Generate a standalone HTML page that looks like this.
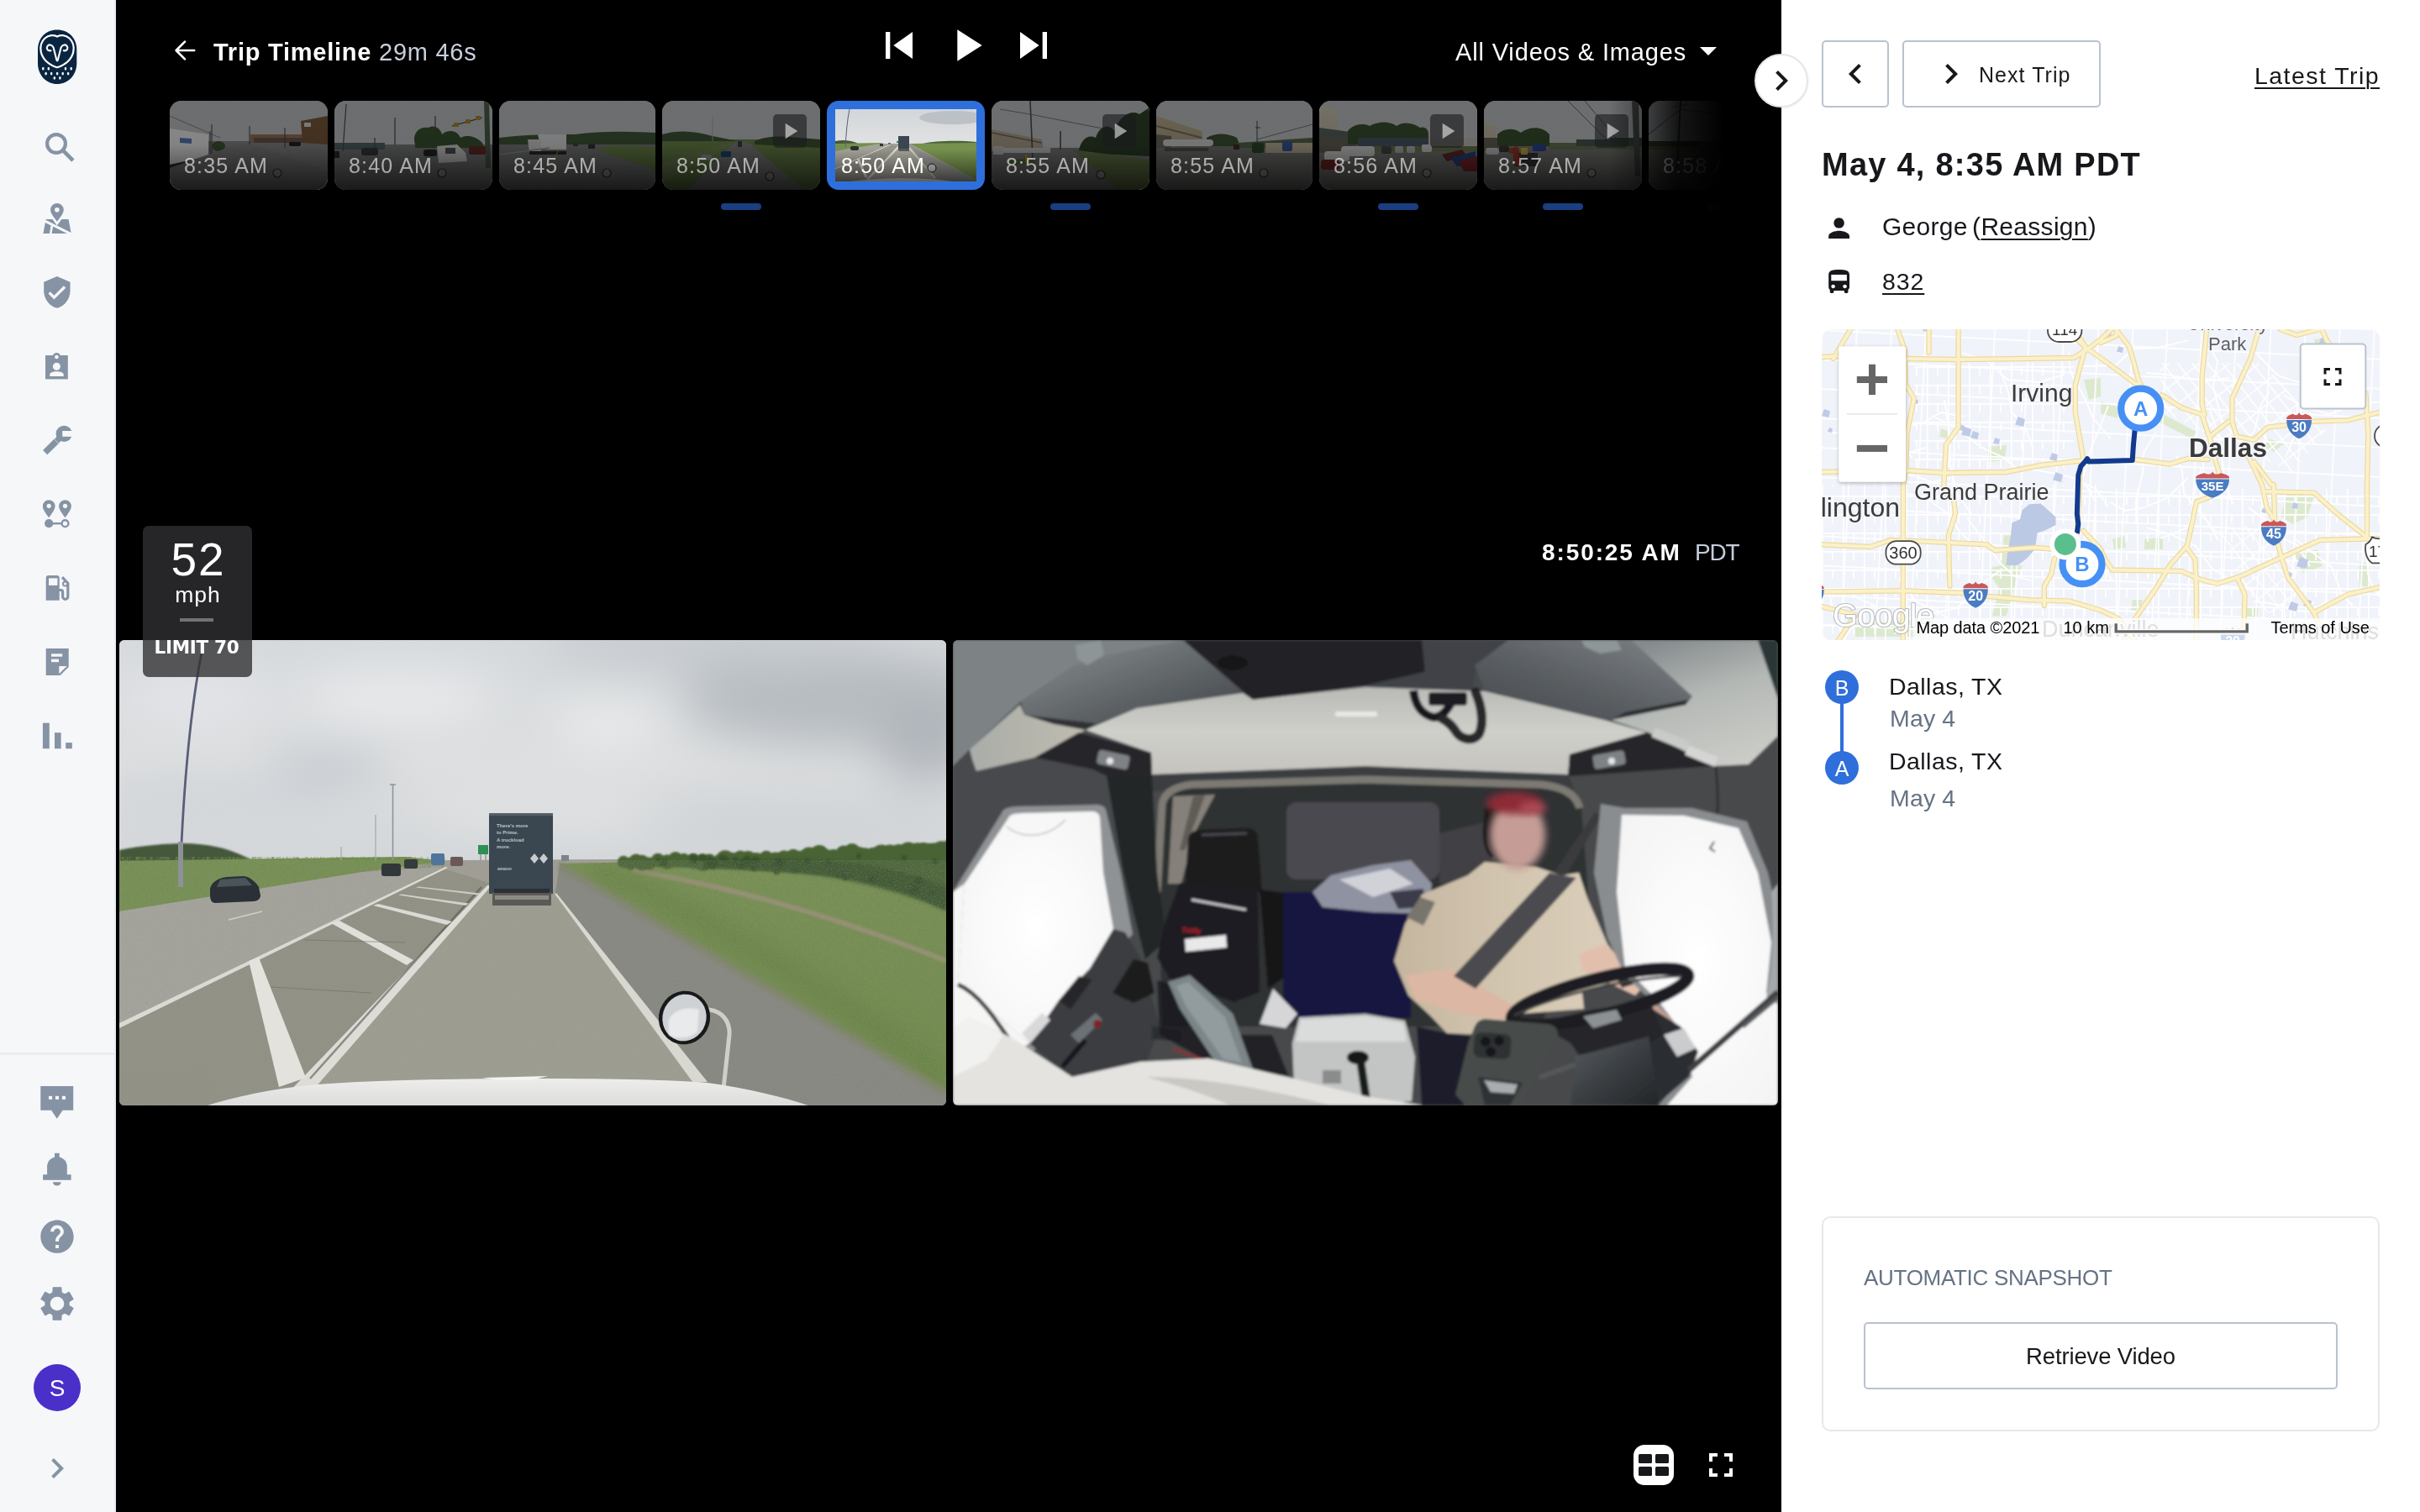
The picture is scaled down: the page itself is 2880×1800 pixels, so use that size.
<!DOCTYPE html>
<html lang="en">
<head>
<meta charset="utf-8">
<title>Trip Timeline</title>
<style>
*{box-sizing:border-box;margin:0;padding:0}
html,body{width:2880px;height:1800px;overflow:hidden;background:#fff}
body{font-family:"Liberation Sans",sans-serif;color:#17181c;position:relative}
.abs{position:absolute}
#side{position:absolute;left:0;top:0;width:138px;height:1800px;background:#f5f7f9;border-right:2px solid #e9ecf0}
#side svg{position:absolute;left:0;top:0}
#stage{position:absolute;left:138px;top:0;width:1982px;height:1800px;background:#000;overflow:hidden}
#panel{position:absolute;left:2120px;top:0;width:760px;height:1800px;background:#fff}
.t{position:absolute;white-space:nowrap;line-height:1;will-change:transform}
/* thumbnails */
.th{position:absolute;top:120px;height:106px;border-radius:14px;overflow:hidden;background:#3a3d3f}
.th svg{position:absolute;left:0;top:0;width:100%;height:100%}
.th .ov{position:absolute;inset:0;background:linear-gradient(to bottom,rgba(0,0,0,.42) 0%,rgba(0,0,0,.47) 50%,rgba(0,0,0,.8) 100%)}
.th .lb{position:absolute;left:17px;top:63px;font-size:25px;letter-spacing:1.2px;color:rgba(255,255,255,.6);line-height:28px;white-space:nowrap;will-change:transform}
.th .pb{position:absolute;right:16px;top:16px;width:40px;height:40px;border-radius:5px;background:rgba(28,28,30,.62)}
.th .pb svg{left:4px;top:4px;width:32px;height:32px}
.ind{position:absolute;top:242px;width:48px;height:8px;border-radius:4px;background:#1a3f80}
.btn{position:absolute;border:2px solid #b9c2cf;border-radius:5px;background:#fff}
u{text-decoration-thickness:2px;text-underline-offset:4px}
</style>
</head>
<body>

<!-- ================= SIDEBAR ================= -->
<div id="side">
<svg width="136" height="1800" viewBox="0 0 136 1800" fill="#8693a4">
<g>
<path fill="#0a2540" d="M68 35.6C82 35.6 91.3 46 91.3 59V75C91.3 90 80.5 100 68 100C55.5 100 45 90 45 75V59C45 46 54 35.6 68 35.6Z"/>
<path fill="none" stroke="#fff" stroke-width="2.2" d="M68 43.4C72 41.4 78 41.4 82.5 45.5C87 49.6 88.6 55.5 87.2 62C85.6 69.5 79 77 68 80.2C57 77 50.4 69.5 48.8 62C47.4 55.5 49 49.6 53.5 45.5C58 41.4 64 41.4 68 43.4Z"/>
<path fill="none" stroke="#fff" stroke-width="2.1" stroke-linecap="round" stroke-linejoin="round" d="M60.5 60.2C56.5 61 54.8 57.6 56.3 55.2C58 52.4 62 52.8 63.6 56.6L67.4 71.6Q68.1 73.2 68.8 71.6L72.6 56.6C74.2 52.8 78.2 52.4 79.9 55.2C81.4 57.6 79.7 61 75.7 60.2"/>
<ellipse cx="51.3" cy="81.7" rx="1.25" ry="1.9" fill="#fff"/>
<ellipse cx="57.8" cy="81.7" rx="1.25" ry="1.9" fill="#fff"/>
<ellipse cx="78" cy="81.7" rx="1.25" ry="1.9" fill="#fff"/>
<ellipse cx="84.7" cy="81.7" rx="1.25" ry="1.9" fill="#fff"/>
<ellipse cx="54.6" cy="87.6" rx="1.25" ry="1.9" fill="#fff"/>
<ellipse cx="61.1" cy="87.6" rx="1.25" ry="1.9" fill="#fff"/>
<ellipse cx="68.1" cy="87.6" rx="1.25" ry="1.9" fill="#fff"/>
<ellipse cx="74.7" cy="87.6" rx="1.25" ry="1.9" fill="#fff"/>
<ellipse cx="81.1" cy="87.6" rx="1.25" ry="1.9" fill="#fff"/>
<ellipse cx="64.8" cy="92.8" rx="1.25" ry="1.9" fill="#fff"/>
<ellipse cx="71.4" cy="92.8" rx="1.25" ry="1.9" fill="#fff"/>
</g>
<circle cx="67" cy="171" r="10.9" fill="none" stroke="#8693a4" stroke-width="4.2"/>
<path d="M75.3 179.3L86.9 191.1" stroke="#8693a4" stroke-width="4.6" fill="none"/>
<path d="M54.7 261H81.5L84.8 277.9H51.4Z"/>
<path d="M52.5 262.6L84.6 278.6" stroke="#f5f7f9" stroke-width="3" fill="none"/>
<path d="M61.9 268.5L60.2 278.5" stroke="#f5f7f9" stroke-width="2.6" fill="none"/>
<path d="M67.9 268.4C62 260.5 57.6 255 57.6 250A10.3 10.3 0 0 1 78.2 250C78.2 255 73.8 260.5 67.9 268.4Z" fill="#f5f7f9"/>
<path d="M67.9 263.8C63.5 258 60.05 253.6 60.05 249.8A7.85 7.85 0 0 1 75.75 249.8C75.75 253.6 72.3 258 67.9 263.8Z"/>
<circle cx="67.9" cy="249.8" r="2.8" fill="#f5f7f9"/>
<path transform="translate(46.98 327.28) scale(1.7389 1.7182)" d="M12 1L3 5v6c0 5.55 3.84 10.74 9 12 5.16-1.26 9-6.45 9-12V5l-9-4zm-2 16l-4-4 1.41-1.41L10 14.17l6.59-6.59L18 9l-8 8z"/>
<rect x="54" y="423" width="26.8" height="28.4"/>
<circle cx="67.4" cy="424.6" r="4.6"/>
<circle cx="67.4" cy="425" r="2.3" fill="#f5f7f9"/>
<circle cx="67.4" cy="436.2" r="4.5" fill="#f5f7f9"/>
<path d="M59.2 448.1V446C59.2 443.5 63 442.3 67.4 442.3S75.7 443.5 75.7 446V448.1Z" fill="#f5f7f9"/>
<circle cx="76.2" cy="516.4" r="9.6"/>
<rect x="74.2" y="513" width="13" height="6.8" fill="#f5f7f9"/>
<path d="M64.3 522.8L69.6 528.3L56.2 541.2L51.1 536Z"/>
<path d="M66.5 521L71.5 526" stroke="#8693a4" stroke-width="5" fill="none"/>
<path d="M58.2 616.2C53.6 609.8 50.900000000000006 606.4 50.900000000000006 602.5A7.3 7.3 0 0 1 65.5 602.5C65.5 606.4 62.800000000000004 609.8 58.2 616.2Z"/>
<circle cx="58.2" cy="602.3" r="2.6" fill="#f5f7f9"/>
<path d="M77.5 616.2C72.9 609.8 70.2 606.4 70.2 602.5A7.3 7.3 0 0 1 84.8 602.5C84.8 606.4 82.1 609.8 77.5 616.2Z"/>
<circle cx="77.5" cy="602.3" r="2.6" fill="#f5f7f9"/>
<circle cx="58.2" cy="623.2" r="5.1"/>
<circle cx="77.5" cy="623.2" r="3.9" fill="none" stroke="#8693a4" stroke-width="2.4"/>
<rect x="62" y="622" width="12" height="2.4"/>
<path d="M54.7 714.7V688A3 3 0 0 1 57.7 685H67.7A3 3 0 0 1 70.7 688V714.7Z"/>
<rect x="58" y="688.4" width="10.4" height="8.5" fill="#f5f7f9"/>
<path d="M70 702.5H72.6A2 2 0 0 1 74.6 704.5V710.3A3.1 3.1 0 0 0 80.8 710.3V694.5L74 687.2" fill="none" stroke="#8693a4" stroke-width="3.2"/>
<circle cx="77.6" cy="695" r="3.6"/>
<circle cx="77.6" cy="695" r="1.6" fill="#f5f7f9"/>
<path d="M54.7 771.9H81.7V794L71.7 804H54.7Z"/>
<rect x="61" y="778.3" width="13.2" height="3.4" fill="#f5f7f9"/>
<rect x="61" y="784.6" width="9" height="3.6" fill="#f5f7f9"/>
<path d="M70.3 793H79.6L70.3 802.2Z" fill="#f5f7f9"/>
<rect x="50.9" y="860.7" width="7.9" height="30.5"/>
<rect x="65" y="872.2" width="7.6" height="19"/>
<rect x="78.2" y="884.1" width="7.6" height="7.1"/>
<rect x="0" y="1253.5" width="136" height="2" fill="#e6e9ed"/>
<path d="M48.3 1293H87.2V1321.7H74.6L67.8 1331.7L61.1 1321.7H48.3Z"/>
<rect x="58" y="1304.8" width="4.1" height="4.1" fill="#f5f7f9"/>
<rect x="65.9" y="1304.8" width="4.1" height="4.1" fill="#f5f7f9"/>
<rect x="73.9" y="1304.8" width="4.1" height="4.1" fill="#f5f7f9"/>
<rect x="65" y="1372.8" width="5.7" height="7"/>
<path d="M56.1 1399V1389A11.85 11.85 0 0 1 79.8 1389V1399Z"/>
<rect x="51.1" y="1398.3" width="33.5" height="6.5"/>
<path d="M63 1407.2H72.6A4.8 4.4 0 0 1 63 1407.2Z"/>
<path transform="translate(44.42 1448.62) scale(1.9650)" d="M12 2C6.48 2 2 6.48 2 12s4.48 10 10 10 10-4.48 10-10S17.52 2 12 2zm1 17h-2v-2h2v2zm2.07-7.75l-.9.92C13.45 12.9 13 13.5 13 15h-2v-.5c0-1.1.45-2.1 1.17-2.83l1.24-1.26c.37-.36.59-.86.59-1.41 0-1.1-.9-2-2-2s-2 .9-2 2H8c0-2.21 1.79-4 4-4s4 1.79 4 4c0 .88-.36 1.68-.93 2.25z"/>
<path d="M62.91 1538.74L63.21 1532.79L72.79 1532.79L73.09 1538.74L76.94 1540.96L82.24 1538.25L87.03 1546.54L82.03 1549.78L82.03 1554.22L87.03 1557.46L82.24 1565.75L76.94 1563.04L73.09 1565.26L72.79 1571.21L63.21 1571.21L62.91 1565.26L59.06 1563.04L53.76 1565.75L48.97 1557.46L53.97 1554.22L53.97 1549.78L48.97 1546.54L53.76 1538.25L59.06 1540.96Z" stroke="#8693a4" stroke-width="1.2" stroke-linejoin="round"/>
<circle cx="68" cy="1552" r="8.3" fill="#f5f7f9"/>
<path transform="translate(44 1724) scale(2)" d="M10 6L8.59 7.41 13.17 12l-4.58 4.59L10 18l6-6z"/>
</svg>
<div class="t" style="left:40px;top:1624px;width:56px;height:56px;border-radius:50%;background:#4a2fc9;color:#fff;font-size:28px;line-height:57px;text-align:center">S</div>
</div>

<!-- ================= STAGE ================= -->
<div id="stage">
<!-- header -->
<svg class="abs" style="left:66px;top:44px" width="32" height="32" viewBox="0 0 32 32" fill="none" stroke="#fff" stroke-width="2.6" stroke-linecap="round" stroke-linejoin="round"><path d="M27.2 16H6.2M16 5.6L5.6 16l10.4 10.400"/></svg>
<div class="t" id="tt" style="left:116px;top:48.2px;font-size:29px;font-weight:bold;color:#fff;letter-spacing:.75px">Trip Timeline</div>
<div class="t" id="dur" style="left:312.5px;top:48.2px;font-size:29px;color:#c9d0dc;letter-spacing:.75px">29m 46s</div>
<!-- controls -->
<svg class="abs" style="left:900px;top:22px" width="64" height="64" viewBox="0 0 24 24" fill="#fff"><path d="M6 6h2v12H6zm3.5 6l8.5 6V6z"/></svg>
<svg class="abs" style="left:980px;top:22px" width="64" height="64" viewBox="0 0 24 24" fill="#fff"><path d="M8 5v14l11-7z"/></svg>
<svg class="abs" style="left:1060px;top:22px" width="64" height="64" viewBox="0 0 24 24" fill="#fff"><path d="M6 18l8.500-6L6 6v12zM16 6v12h2V6h-2z"/></svg>
<!-- filter -->
<div class="t" id="flt" style="left:1594px;top:47.5px;font-size:29px;color:#fff;letter-spacing:.85px">All Videos &amp; Images</div>
<svg class="abs" style="left:1871px;top:36px" width="48" height="48" viewBox="0 0 24 24" fill="#fff"><path d="M7 10l5 5 5-5z"/></svg>
<!-- thumbnails -->
<div class="abs" style="left:64px;top:100px;width:1854px;height:170px;overflow:hidden">
<div class="th" style="top:20px;left:0px;width:188px"><svg viewBox="0 0 188 106" preserveAspectRatio="none"><defs><linearGradient id="tsk_1" x1="0" y1="0" x2="0" y2="1"><stop offset="0" stop-color="#b9bcc0"/><stop offset="1" stop-color="#cfd1d3"/></linearGradient></defs><rect width="188" height="60" fill="url(#tsk_1)"/><rect y="48" width="188" height="58" fill="#8b8c8b"/><path d="M96 40H160V50H96Z" fill="#a0765a"/><path d="M100 44H158V50H100Z" fill="#6e5a4e"/><path d="M156 24L188 18V52L158 50Z" fill="#7a5a3c"/><rect x="160" y="26" width="8" height="5" fill="#d9d9d9"/><path d="M0 33L46 40V68L8 76L0 78Z" fill="#f6f6f6"/><path d="M0 76L46 66V70L6 82L0 82Z" fill="#333"/><path d="M12 44l14 1v6l-14-1z" fill="#5a7fb8"/><path d="M48 36V66M50 28V64M95 30V58M137 32V56" stroke="#3f3f3f" stroke-width="1"/><path d="M0 18L60 44" stroke="#555" stroke-width=".6"/><ellipse cx="58" cy="54" rx="8" ry="6" fill="#3f5a35"/><rect x="142" y="49" width="14" height="5" rx="2" fill="#222"/><path d="M0 80L80 52L100 52L188 84V106H0Z" fill="#858685"/><circle cx="128" cy="86" r="5" fill="#9a9c9e" stroke="#333" stroke-width="1.2"/></svg><div class="ov"></div><div class="lb">8:35 AM</div></div>
<div class="th" style="top:20px;left:196px;width:188px"><svg viewBox="0 0 188 106" preserveAspectRatio="none"><defs><linearGradient id="tsk_2" x1="0" y1="0" x2="0" y2="1"><stop offset="0" stop-color="#b9bcc0"/><stop offset="1" stop-color="#cfd1d3"/></linearGradient></defs><rect width="188" height="60" fill="url(#tsk_2)"/><rect y="52" width="188" height="54" fill="#7f8080"/><path d="M96 52C92 40 100 30 112 32C118 28 126 32 128 40C134 34 146 34 150 44C158 40 168 42 176 50L178 56H96Z" fill="#3a5530"/><path d="M0 50H60V58H0Z" fill="#54666e"/><path d="M14 4L10 60M48 44V58M72 20V52M120 18V40" stroke="#4a4a4a" stroke-width="1.2"/><path d="M140 30L176 20" stroke="#333" stroke-width="1.2"/><rect x="142" y="26" width="6" height="5" fill="#a88b2a"/><rect x="156" y="22" width="6" height="5" fill="#a88b2a"/><rect x="168" y="18" width="6" height="5" fill="#a88b2a"/><path d="M178 0L184 0L186 80L180 80Z" fill="#4f5f4a"/><path d="M122 54L146 52L156 62L158 72L124 74Z" fill="#dcdcdc"/><rect x="132" y="56" width="12" height="7" fill="#555"/><rect x="32" y="56" width="20" height="9" rx="3" fill="#3a3d42"/><rect x="106" y="58" width="16" height="8" rx="3" fill="#25272a"/><rect x="160" y="54" width="20" height="10" rx="2" fill="#6a2d28"/><rect x="0" y="60" width="6" height="8" fill="#2c2c2c"/><circle cx="128" cy="86" r="5" fill="#9a9c9e" stroke="#333" stroke-width="1.2"/></svg><div class="ov"></div><div class="lb">8:40 AM</div></div>
<div class="th" style="top:20px;left:392px;width:186px"><svg viewBox="0 0 186 106" preserveAspectRatio="none"><defs><linearGradient id="tsk_3" x1="0" y1="0" x2="0" y2="1"><stop offset="0" stop-color="#b9bcc0"/><stop offset="1" stop-color="#cfd1d3"/></linearGradient></defs><rect width="188" height="60" fill="url(#tsk_3)"/><rect y="50" width="186" height="56" fill="#7e7f7f"/><path d="M0 44C30 40 60 40 90 40C120 36 150 36 186 38V52H0Z" fill="#445a3a"/><path d="M120 56C140 52 165 52 186 56V82C160 74 140 66 120 60Z" fill="#6f8a4c"/><path d="M46 40H80V58H50Z" fill="#e4e5e6"/><path d="M34 46H50V62H36Z" fill="#d8d9da"/><rect x="36" y="60" width="44" height="4" fill="#2b2b2b"/><rect x="106" y="52" width="8" height="5" fill="#333"/><rect x="88" y="50" width="6" height="4" fill="#444"/><path d="M0 64L60 56" stroke="#9c9c9c" stroke-width="1.5"/><path d="M70 60L56 90" stroke="#a79a3a" stroke-width="1"/><circle cx="128" cy="86" r="5" fill="#9a9c9e" stroke="#333" stroke-width="1.2"/></svg><div class="ov"></div><div class="lb">8:45 AM</div></div>
<div class="th" style="top:20px;left:586px;width:188px"><svg viewBox="0 0 188 106" preserveAspectRatio="none"><defs><linearGradient id="tsk_4" x1="0" y1="0" x2="0" y2="1"><stop offset="0" stop-color="#b9bcc0"/><stop offset="1" stop-color="#cfd1d3"/></linearGradient></defs><rect width="188" height="60" fill="url(#tsk_4)"/><rect y="46" width="188" height="60" fill="#6f8a4c"/><path d="M0 40C20 34 40 36 60 42L90 48H0Z" fill="#41583a"/><path d="M110 48C130 38 160 44 188 46V56L110 52Z" fill="#3d5633"/><path d="M88 48L100 48L170 106H30Z" fill="#858685"/><path d="M0 74L80 50L88 50L0 96Z" fill="#7a8b58"/><path d="M60 18V48" stroke="#aaa" stroke-width="1"/><rect x="70" y="60" width="12" height="7" rx="2" fill="#1f4a7c"/><rect x="46" y="64" width="13" height="7" rx="2" fill="#9fa3a6"/><rect x="90" y="48" width="5" height="7" fill="#3a4048"/><circle cx="128" cy="90" r="5" fill="#9a9c9e" stroke="#333" stroke-width="1.2"/></svg><div class="ov"></div><div class="pb"><svg viewBox="0 0 24 24" fill="rgba(255,255,255,.55)"><path d="M8 5v14l11-7z"/></svg></div><div class="lb">8:50 AM</div></div>
<div class="ind" style="top:142px;left:656px"></div>
<div class="th" style="top:20px;left:782px;width:188px;background:#2f6fdb"><div class="abs" style="left:10px;top:10px;width:168px;height:86px;overflow:hidden;background:#9a9c98"><svg viewBox="0 0 168 86" preserveAspectRatio="none" style="position:absolute;left:0;top:0;width:100%;height:100%"><defs><linearGradient id="tsk2" x1="0" y1="0" x2="0" y2="1"><stop offset="0" stop-color="#d3d6d9"/><stop offset="1" stop-color="#e1e2e3"/></linearGradient><linearGradient id="tdk" x1="0" y1="0" x2="0" y2="1"><stop offset="0" stop-color="#000" stop-opacity="0"/><stop offset=".55" stop-color="#000" stop-opacity="0"/><stop offset="1" stop-color="#000" stop-opacity=".6"/></linearGradient></defs><rect width="168" height="44" fill="url(#tsk2)"/><ellipse cx="140" cy="10" rx="40" ry="8" fill="#bcc1c7"/><rect y="41" width="168" height="45" fill="#a3a297"/><path d="M0 38C10 36 20 37 27 41H0Z" fill="#44583a"/><path d="M104 41C120 37 150 37 168 39V50C150 46 125 43 104 42Z" fill="#486436"/><path d="M0 41L58 40L0 50Z" fill="#74904f"/><path d="M89 41L168 40V84Z" fill="#76914e"/><path d="M88 42L168 84V86H122Z" fill="#8f908a"/><path d="M0 71L66 42L76 45L35 83L19 86H0Z" fill="#96958a"/><path d="M0 71L66 42" stroke="#dad9d2" stroke-width="1"/><path d="M75 45L38 84" stroke="#dddcd6" stroke-width="2.4"/><path d="M27 59L37 81" stroke="#e3e2dd" stroke-width="3"/><path d="M88 46L119 82" stroke="#d8d7d0" stroke-width="1.5"/><rect x="75" y="32" width="13" height="17" fill="#3a4650"/><rect x="76" y="47" width="12" height="3" fill="#5b5a56"/><path d="M17 0C14 14 13 30 12 45" stroke="#5a5e78" stroke-width="1" fill="none"/><rect x="18" y="44" width="10" height="5" rx="2" fill="#2a3035"/><rect x="53" y="41" width="4" height="3" fill="#30363a"/><rect x="63" y="40" width="3" height="2" fill="#4f759b"/><rect x="73" y="38" width="2" height="2" fill="#2f8f55"/><circle cx="115" cy="70" r="5" fill="#cfd2d4" stroke="#17191a" stroke-width="1"/><path d="M18 86C50 82 100 80 140 86Z" fill="#e8e8e6"/><rect width="168" height="86" fill="url(#tdk)"/></svg></div><div class="lb" style="color:#fff">8:50 AM</div></div>
<div class="th" style="top:20px;left:978px;width:188px"><svg viewBox="0 0 188 106" preserveAspectRatio="none"><defs><linearGradient id="tsk_5" x1="0" y1="0" x2="0" y2="1"><stop offset="0" stop-color="#b9bcc0"/><stop offset="1" stop-color="#cfd1d3"/></linearGradient></defs><rect width="188" height="60" fill="url(#tsk_5)"/><rect y="56" width="188" height="50" fill="#808180"/><path d="M0 34L60 46L62 60H0Z" fill="#b5aa93"/><path d="M0 38L60 50" stroke="#6e6a60" stroke-width="1.5"/><path d="M46 0L49 70M82 36V58" stroke="#4f4a45" stroke-width="1.6"/><path d="M10 10L46 16L188 44" stroke="#555" stroke-width=".7" fill="none"/><path d="M104 58C108 44 116 40 124 44C128 30 140 26 146 36C152 18 166 10 176 16L188 8V66L104 62Z" fill="#2f4229"/><path d="M96 58L188 70V106H150Z" fill="#6e8250"/><path d="M14 56H70V62H14Z" fill="#d0d1d2"/><rect x="2" y="54" width="12" height="10" fill="#c9cacc"/><path d="M20 72C30 68 44 68 52 72L50 76H22Z" fill="#5f7a45"/><rect x="40" y="64" width="3" height="10" fill="#b59a2a"/><circle cx="130" cy="88" r="5" fill="#9a9c9e" stroke="#333" stroke-width="1.2"/></svg><div class="ov"></div><div class="pb"><svg viewBox="0 0 24 24" fill="rgba(255,255,255,.55)"><path d="M8 5v14l11-7z"/></svg></div><div class="lb">8:55 AM</div></div>
<div class="ind" style="top:142px;left:1048px"></div>
<div class="th" style="top:20px;left:1174px;width:186px"><svg viewBox="0 0 186 106" preserveAspectRatio="none"><defs><linearGradient id="tsk_6" x1="0" y1="0" x2="0" y2="1"><stop offset="0" stop-color="#b9bcc0"/><stop offset="1" stop-color="#cfd1d3"/></linearGradient></defs><rect width="188" height="60" fill="url(#tsk_6)"/><rect y="52" width="186" height="54" fill="#7b7b79"/><path d="M0 18L54 36L56 52L0 56Z" fill="#b9ad8e"/><path d="M0 30L54 44" stroke="#7a7464" stroke-width="2"/><path d="M0 40L18 42V56H0Z" fill="#6c6a5e"/><path d="M60 44C70 38 84 38 96 44L100 54H60Z" fill="#3e5636"/><path d="M96 50L186 44V56H96Z" fill="#566a4a"/><path d="M120 24V56M118 32H124" stroke="#444" stroke-width="1"/><path d="M120 46L186 28" stroke="#555" stroke-width=".7"/><path d="M130 50H186V62H130Z" fill="#c2b89e"/><rect x="8" y="46" width="60" height="8" rx="4" fill="#d9dadb"/><path d="M10 56H62V60H10Z" fill="#555"/><rect x="114" y="50" width="14" height="12" rx="2" fill="#2e4a2c"/><rect x="150" y="48" width="12" height="12" rx="2" fill="#3a5a9a"/><rect x="92" y="52" width="7" height="6" fill="#4a2a28"/><circle cx="128" cy="86" r="5" fill="#9a9c9e" stroke="#333" stroke-width="1.2"/></svg><div class="ov"></div><div class="lb">8:55 AM</div></div>
<div class="th" style="top:20px;left:1368px;width:188px"><svg viewBox="0 0 188 106" preserveAspectRatio="none"><defs><linearGradient id="tsk_7" x1="0" y1="0" x2="0" y2="1"><stop offset="0" stop-color="#b9bcc0"/><stop offset="1" stop-color="#cfd1d3"/></linearGradient></defs><rect width="188" height="60" fill="url(#tsk_7)"/><rect y="50" width="188" height="56" fill="#80807e"/><path d="M0 4L22 12V40L0 40Z" fill="#c9c2ae"/><path d="M0 32L44 38L46 44L0 44Z" fill="#5a6660"/><path d="M0 44H44V62H0Z" fill="#6a6458"/><path d="M34 36C40 28 52 26 60 30C70 24 84 24 92 30C100 24 112 26 120 32C126 30 130 34 130 40V52H34Z" fill="#3a5230"/><path d="M46 44H140V54H46Z" fill="#4d5a66"/><path d="M30 54H188V60H30Z" fill="#6d7f50"/><path d="M130 44H188V54H130Z" fill="#c9c6c0"/><rect x="26" y="54" width="40" height="12" rx="4" fill="#dfe0e1"/><rect x="6" y="60" width="30" height="12" rx="4" fill="#e3e3e4"/><rect x="2" y="70" width="22" height="12" rx="4" fill="#7a2a28"/><rect x="74" y="54" width="12" height="9" rx="2" fill="#4a4a50"/><rect x="90" y="54" width="10" height="8" rx="2" fill="#b9babb"/><rect x="104" y="54" width="10" height="8" rx="2" fill="#bfc0c2"/><rect x="122" y="52" width="12" height="9" rx="2" fill="#d9d9d9"/><path d="M146 64L170 58L176 66L152 72Z" fill="#6a2a2a"/><path d="M156 68L186 60V76L164 78Z" fill="#2a4a8a"/><path d="M166 72L188 66V84L172 84Z" fill="#8a2a30"/><circle cx="128" cy="86" r="5" fill="#9a9c9e" stroke="#333" stroke-width="1.2"/></svg><div class="ov"></div><div class="pb"><svg viewBox="0 0 24 24" fill="rgba(255,255,255,.55)"><path d="M8 5v14l11-7z"/></svg></div><div class="lb">8:56 AM</div></div>
<div class="ind" style="top:142px;left:1438px"></div>
<div class="th" style="top:20px;left:1564px;width:188px"><svg viewBox="0 0 188 106" preserveAspectRatio="none"><defs><linearGradient id="tsk_8" x1="0" y1="0" x2="0" y2="1"><stop offset="0" stop-color="#b9bcc0"/><stop offset="1" stop-color="#cfd1d3"/></linearGradient></defs><rect width="188" height="60" fill="url(#tsk_8)"/><rect y="52" width="188" height="54" fill="#7f7f7d"/><path d="M0 26L14 30V52H0Z" fill="#c9c2ae"/><path d="M0 44H20V60H0Z" fill="#6a6458"/><path d="M16 40C24 32 36 32 44 38C54 30 70 30 78 40V54H16Z" fill="#3a5230"/><path d="M78 50H188V58H78Z" fill="#6a7a58"/><path d="M150 44H188V54H150Z" fill="#3c5a40"/><path d="M110 46H150V54H110Z" fill="#4a5a50"/><path d="M100 0L150 50M120 0L160 48" stroke="#444" stroke-width=".8"/><path d="M176 0L184 0L186 90L180 90Z" fill="#555a58"/><rect x="2" y="56" width="16" height="8" rx="3" fill="#d0d0d0"/><rect x="18" y="54" width="12" height="7" rx="2" fill="#3a3a40"/><rect x="30" y="56" width="12" height="7" rx="2" fill="#9a4a2a"/><path d="M36 62H64V78H36Z" fill="#3a3a3e"/><path d="M34 56L40 54L44 76L36 78Z" fill="#a03a2a"/><rect x="44" y="56" width="8" height="8" fill="#d9b040"/><rect x="58" y="52" width="16" height="8" rx="2" fill="#2a4a9a"/><circle cx="128" cy="86" r="5" fill="#9a9c9e" stroke="#333" stroke-width="1.2"/></svg><div class="ov"></div><div class="pb"><svg viewBox="0 0 24 24" fill="rgba(255,255,255,.55)"><path d="M8 5v14l11-7z"/></svg></div><div class="lb">8:57 AM</div></div>
<div class="ind" style="top:142px;left:1634px"></div>
<div class="th" style="top:20px;left:1760px;width:188px"><svg viewBox="0 0 188 106" preserveAspectRatio="none"><defs><linearGradient id="tsk_9" x1="0" y1="0" x2="0" y2="1"><stop offset="0" stop-color="#b9bcc0"/><stop offset="1" stop-color="#cfd1d3"/></linearGradient></defs><rect width="188" height="60" fill="url(#tsk_9)"/><rect y="50" width="188" height="56" fill="#7b7b77"/><path d="M0 48H188V58H0Z" fill="#6e6a4e"/><path d="M0 48H60V54H0Z" fill="#3a5230"/><path d="M38 0L34 80" stroke="#444" stroke-width="2"/><path d="M30 8L46 4M0 40L38 10L188 30" stroke="#444" stroke-width=".8" fill="none"/></svg><div class="ov"></div><div class="pb"><svg viewBox="0 0 24 24" fill="rgba(255,255,255,.55)"><path d="M8 5v14l11-7z"/></svg></div><div class="lb">8:58 AM</div></div>
<div class="ind" style="top:142px;left:1830px"></div>
<div class="abs" style="right:0;top:0;width:140px;height:170px;background:linear-gradient(to right,rgba(0,0,0,0) 0,rgba(0,0,0,.35) 38px,rgba(0,0,0,.8) 80px,#000 136px)"></div>
</div>
<!-- videos -->
<div class="abs" style="left:4px;top:762px;width:984px;height:554px;border-radius:6px;overflow:hidden;background:#9b9c94">
<svg class="abs" style="left:0;top:0" width="984" height="554" viewBox="0 0 984 554">
<defs>
<filter id="rb30" x="-20%" y="-20%" width="140%" height="140%"><feGaussianBlur stdDeviation="28"/></filter>
<filter id="rb12" x="-20%" y="-20%" width="140%" height="140%"><feGaussianBlur stdDeviation="12"/></filter>
<filter id="rb3" x="-10%" y="-10%" width="120%" height="120%"><feGaussianBlur stdDeviation="2.2"/></filter>
<filter id="rb1"><feGaussianBlur stdDeviation="0.8"/></filter>
<filter id="rnoise" x="0" y="0" width="100%" height="100%"><feTurbulence type="fractalNoise" baseFrequency="0.9" numOctaves="2" seed="4"/><feColorMatrix values="0 0 0 0 0.3  0 0 0 0 0.3  0 0 0 0 0.25  0.9 0.9 0.9 0 -1.05"/></filter>
<filter id="gnoise" x="0" y="0" width="100%" height="100%"><feTurbulence type="fractalNoise" baseFrequency="0.45 0.16" numOctaves="3" seed="9"/><feColorMatrix values="0 0 0 0 0.16  0 0 0 0 0.26  0 0 0 0 0.08  1.6 1.6 0 0 -1.3"/></filter>
<linearGradient id="skyg" x1="0" y1="0" x2="0" y2="1"><stop offset="0" stop-color="#d6d9dc"/><stop offset=".55" stop-color="#dcdedf"/><stop offset="1" stop-color="#d3d6d9"/></linearGradient>
<linearGradient id="grR" x1="0" y1="0" x2="0" y2="1"><stop offset="0" stop-color="#789150"/><stop offset="1" stop-color="#6d8a46"/></linearGradient>
<linearGradient id="hood" x1="0" y1="0" x2="0" y2="1"><stop offset="0" stop-color="#ededeb"/><stop offset="1" stop-color="#dcdcda"/></linearGradient>
<clipPath id="gclipR"><path d="M522 266L984 258V540Z"/></clipPath>
</defs>
<!-- sky -->
<rect width="984" height="270" fill="url(#skyg)"/>
<g filter="url(#rb30)">
<ellipse cx="860" cy="70" rx="190" ry="55" fill="#b6bbc0"/>
<ellipse cx="960" cy="120" rx="60" ry="50" fill="#b0b5bb"/>
<ellipse cx="700" cy="10" rx="200" ry="30" fill="#c4c9ce"/>
<ellipse cx="250" cy="150" rx="70" ry="18" fill="#c0c5cc"/>
<ellipse cx="330" cy="70" rx="120" ry="30" fill="#e9ebed"/>
<ellipse cx="580" cy="100" rx="70" ry="30" fill="#e8eaeb"/>
<ellipse cx="90" cy="70" rx="90" ry="40" fill="#e2e4e7"/>
<ellipse cx="120" cy="190" rx="150" ry="20" fill="#cfd3d8"/>
<ellipse cx="800" cy="215" rx="200" ry="14" fill="#c9cdd2"/>
<ellipse cx="500" cy="200" rx="150" ry="25" fill="#e0e2e3"/>
</g>
<!-- far hills left -->
<path d="M0 250C20 246 40 243 75 242C110 242 135 250 158 262L0 268Z" fill="#44583a" filter="url(#rb1)"/>
<!-- ground base / road -->
<path d="M0 264L984 259V554H0Z" fill="#a19f97"/>
<!-- left grass -->
<path d="M0 263L340 258L388 263L290 276L0 323Z" fill="#74904f"/>
<path d="M0 263L340 258L388 263L290 276L0 323Z" filter="url(#gnoise)" opacity=".8"/>
<!-- right grass -->
<path d="M522 266L984 258V540Z" fill="url(#grR)"/>
<g clip-path="url(#gclipR)"><rect x="500" y="250" width="484" height="300" filter="url(#gnoise)" opacity=".9"/>
<path d="M612 274C760 300 880 340 984 382" stroke="#94906f" stroke-width="6" fill="none" filter="url(#rb1)"/>
<path d="M560 270C700 330 860 430 984 520" stroke="#64803f" stroke-width="26" fill="none" filter="url(#rb12)" opacity=".7"/>
</g>
<!-- tree line right -->
<g fill="#486334" filter="url(#rb1)"><path d="M596 266L700 258L984 246V322C960 310 930 298 900 290C860 280 760 272 600 269Z"/><circle cx="600" cy="264" r="7.2"/><circle cx="608" cy="266" r="7.6"/><circle cx="615" cy="263" r="8.6"/><circle cx="622" cy="265" r="9.3"/><circle cx="631" cy="266" r="7.4"/><circle cx="641" cy="262" r="8.2"/><circle cx="652" cy="264" r="8.8"/><circle cx="662" cy="261" r="9.0"/><circle cx="672" cy="260" r="6.2"/><circle cx="683" cy="263" r="9.2"/><circle cx="694" cy="265" r="10.2"/><circle cx="702" cy="263" r="8.4"/><circle cx="714" cy="262" r="7.2"/><circle cx="721" cy="261" r="10.8"/><circle cx="729" cy="261" r="8.2"/><circle cx="739" cy="259" r="8.6"/><circle cx="748" cy="262" r="10.9"/><circle cx="758" cy="264" r="10.9"/><circle cx="770" cy="259" r="8.3"/><circle cx="781" cy="264" r="11.5"/><circle cx="791" cy="259" r="8.8"/><circle cx="802" cy="258" r="9.3"/><circle cx="808" cy="263" r="12.2"/><circle cx="815" cy="260" r="10.0"/><circle cx="821" cy="258" r="11.5"/><circle cx="833" cy="255" r="11.1"/><circle cx="839" cy="258" r="10.1"/><circle cx="850" cy="260" r="10.9"/><circle cx="862" cy="254" r="9.4"/><circle cx="872" cy="252" r="10.0"/><circle cx="880" cy="256" r="10.0"/><circle cx="887" cy="258" r="10.7"/><circle cx="898" cy="258" r="11.2"/><circle cx="907" cy="256" r="12.4"/><circle cx="917" cy="256" r="12.4"/><circle cx="928" cy="255" r="11.9"/><circle cx="939" cy="252" r="11.5"/><circle cx="950" cy="254" r="12.7"/><circle cx="957" cy="254" r="12.9"/><circle cx="963" cy="255" r="13.2"/><circle cx="969" cy="254" r="12.6"/><circle cx="979" cy="253" r="13.8"/><circle cx="990" cy="248" r="11.3"/></g>
<path d="M700 264C760 260 820 260 880 266C920 272 960 284 984 294V322C940 302 880 286 820 278C780 274 740 272 700 270Z" fill="#3a542e" filter="url(#rb3)"/>
<g fill="#2f4726" opacity=".6" filter="url(#rb1)"><circle cx="971" cy="264" r="3.4"/><circle cx="844" cy="264" r="3.1"/><circle cx="748" cy="263" r="3.8"/><circle cx="743" cy="264" r="4.3"/><circle cx="649" cy="265" r="4.2"/><circle cx="747" cy="261" r="4.4"/><circle cx="722" cy="261" r="3.3"/><circle cx="880" cy="257" r="3.0"/><circle cx="755" cy="272" r="3.3"/><circle cx="934" cy="259" r="3.0"/><circle cx="864" cy="283" r="3.4"/><circle cx="717" cy="260" r="3.6"/><circle cx="706" cy="269" r="4.5"/><circle cx="703" cy="262" r="4.4"/><circle cx="861" cy="280" r="3.0"/><circle cx="685" cy="262" r="4.4"/><circle cx="733" cy="263" r="3.3"/><circle cx="784" cy="265" r="4.8"/><circle cx="694" cy="259" r="4.8"/><circle cx="943" cy="299" r="3.3"/><circle cx="967" cy="301" r="2.7"/><circle cx="896" cy="285" r="4.0"/><circle cx="819" cy="263" r="3.0"/><circle cx="718" cy="259" r="3.8"/><circle cx="739" cy="270" r="2.1"/><circle cx="951" cy="286" r="4.8"/><circle cx="948" cy="296" r="3.7"/><circle cx="645" cy="267" r="2.5"/><circle cx="743" cy="268" r="3.6"/><circle cx="782" cy="276" r="3.8"/><circle cx="757" cy="262" r="4.6"/><circle cx="804" cy="274" r="3.1"/><circle cx="708" cy="265" r="4.5"/><circle cx="699" cy="268" r="4.8"/><circle cx="917" cy="288" r="2.0"/><circle cx="856" cy="281" r="2.1"/><circle cx="733" cy="262" r="3.6"/><circle cx="786" cy="266" r="4.3"/><circle cx="641" cy="261" r="2.4"/><circle cx="683" cy="260" r="4.9"/></g>
<!-- left lanes slightly lighter -->
<path d="M0 323L290 276L386 270L0 458Z" fill="#a6a59e"/>
<!-- gore area -->
<path d="M0 458L386 272L443 290L205 534L110 554H0Z" fill="#929186"/>
<!-- main lane -->
<path d="M443 288L520 300L700 534L200 540Z" fill="#9f9e92"/>
<!-- shoulder -->
<path d="M519 300L524 268L984 538V554H715Z" fill="#868781"/>
<path d="M524 268L984 538" stroke="#7d8466" stroke-width="10" fill="none" filter="url(#rb3)" opacity=".8"/>
<!-- road texture -->
<rect x="0" y="262" width="984" height="292" filter="url(#rnoise)" opacity=".5"/>
<!-- lane lines -->
<path d="M0 456L388 270L391 271L0 462Z" fill="#dad9d2"/>
<path d="M438 292L444 291L232 534L200 540Z" fill="#dddcd6"/>
<path d="M236 524L440 296" stroke="#55564f" stroke-width="2.5" fill="none" opacity=".6" transform="translate(-9 -2)"/>
<path d="M154 382L166 378L222 521L190 532Z" fill="#e3e2dd"/>
<path d="M252 337L262 334L350 381L342 387Z" fill="#e0dfd9"/>
<path d="M302 316L308 314L396 335L390 339Z" fill="#dad9d3"/>
<path d="M332 303.500L336 302.500L416 313.500L412 316Z" fill="#d2d1cb"/>
<path d="M353 294.500L356 293.500L430 301.500L427 303.500Z" fill="#cccbc5"/>
<path d="M518 302L520.500 301.500L700 526L683 527Z" fill="#d8d7d0"/>
<path d="M130 333L170 323" stroke="#cfcec8" stroke-width="1.6"/>
<!-- joints -->
<path d="M180 413L300 420M220 357L340 360" stroke="#6f6e66" stroke-width="1" opacity=".6"/>
<!-- light pole -->
<path d="M101 0C86 70 76 170 72 292" stroke="#5a5e78" stroke-width="2.8" fill="none"/>
<path d="M70 240H76V294H70Z" fill="#8e9196"/>
<!-- distant poles -->
<path d="M325.500 172V262M322 172H329" stroke="#8f9499" stroke-width="1.6" fill="none"/>
<path d="M305 208V262M264 246V262" stroke="#a3a7ab" stroke-width="1.2"/>
<!-- cars -->
<path d="M108 296C110 288 118 283 128 282L148 281C156 282 162 288 166 294L168 304C168 308 164 311 160 311L114 313C110 313 108 309 108 304Z" fill="#2a3035"/>
<path d="M120 285L150 283L158 292L116 294Z" fill="#4a545b"/>
<rect x="312" y="266" width="23" height="15" rx="3" fill="#30363a"/>
<rect x="339" y="261" width="16" height="11" rx="2" fill="#353a3d"/>
<rect x="371" y="254" width="16" height="14" rx="2" fill="#4f759b"/>
<rect x="394" y="258" width="15" height="11" rx="2" fill="#6a5a57"/>
<rect x="427" y="244" width="12" height="11" fill="#2f8f55"/>
<path d="M430 255V262M436 255V262" stroke="#777" stroke-width="1"/>
<!-- trailer -->
<rect x="440" y="206" width="76" height="96" fill="#3a4650"/>
<rect x="440" y="206" width="76" height="3" fill="#55606a"/>
<rect x="444" y="300" width="70" height="16" fill="#5b5a56"/>
<rect x="447" y="304" width="64" height="5" fill="#8e8b85"/>
<rect x="446" y="296" width="66" height="5" fill="#2b3036"/>
<path d="M489 260l5-6 5 6-5 6zM500 260l5-6 5 6-5 6z" fill="#c9ccce"/>
<text x="449" y="223" font-size="6" fill="#b9c4c6" font-family="Liberation Sans,sans-serif" font-weight="bold">There's more</text>
<text x="449" y="230.500" font-size="6" fill="#b9c4c6" font-family="Liberation Sans,sans-serif" font-weight="bold">to Prime.</text>
<text x="449" y="240" font-size="6" fill="#b9c4c6" font-family="Liberation Sans,sans-serif" font-weight="bold">A truckload</text>
<text x="449" y="247.500" font-size="6" fill="#b9c4c6" font-family="Liberation Sans,sans-serif" font-weight="bold">more.</text>
<text x="450" y="274" font-size="4.500" fill="#b9c4c6" font-family="Liberation Sans,sans-serif" font-weight="bold">amazon</text>
<rect x="526" y="256" width="9" height="7" fill="#7d858c"/>
<!-- mirror -->
<path d="M702 440C716 442 727 452 726 470L719 534" stroke="#cfcfca" stroke-width="5" fill="none" stroke-linecap="round"/>
<ellipse cx="672.500" cy="449.500" rx="30.500" ry="32" transform="rotate(18 672.500 449.500)" fill="#17191a"/>
<ellipse cx="672.500" cy="449.500" rx="26" ry="28" transform="rotate(18 672.500 449.500)" fill="#cfd2d4"/>
<path d="M654 452C660 440 676 436 690 440L688 466C680 474 664 476 654 470Z" fill="#e9eaeb" filter="url(#rb1)"/>
<!-- hood -->
<path d="M105 554C150 540 200 531 250 528C330 523 420 522 500 522C580 522 650 523 700 527C750 534 790 544 820 554Z" fill="url(#hood)"/>
<path d="M432 521L510 519L490 524L452 524Z" fill="#f4f4f2"/>
</svg>

</div>
<div class="abs" style="left:996px;top:762px;width:982px;height:554px;border-radius:6px;overflow:hidden;background:#555">
<svg class="abs" style="left:0;top:0" width="982" height="554" viewBox="0 0 982 554">
<defs>
<filter id="cb1" x="-5%" y="-5%" width="110%" height="110%"><feGaussianBlur stdDeviation="1.5"/></filter>
<filter id="cb4" x="-20%" y="-20%" width="140%" height="140%"><feGaussianBlur stdDeviation="4"/></filter>
<filter id="cb8" x="-30%" y="-30%" width="160%" height="160%"><feGaussianBlur stdDeviation="8"/></filter>
<filter id="cb14" x="-30%" y="-30%" width="160%" height="160%"><feGaussianBlur stdDeviation="14"/></filter>
<linearGradient id="cvL" x1="0" y1="0" x2="1" y2="1"><stop offset="0" stop-color="#8b9092"/><stop offset=".6" stop-color="#5d6265"/><stop offset="1" stop-color="#3f4347"/></linearGradient>
<linearGradient id="cvR" x1="1" y1="0" x2="0" y2="1"><stop offset="0" stop-color="#7f8487"/><stop offset=".55" stop-color="#5a5e62"/><stop offset="1" stop-color="#45484c"/></linearGradient>
<linearGradient id="chl" x1="0" y1="0" x2="0" y2="1"><stop offset="0" stop-color="#b9bab6"/><stop offset=".5" stop-color="#cfcfca"/><stop offset="1" stop-color="#c4c3be"/></linearGradient>
<linearGradient id="ctanL" x1="0" y1="0" x2="1" y2="0"><stop offset="0" stop-color="#a9aca8"/><stop offset="1" stop-color="#c2beb0"/></linearGradient>
<linearGradient id="ctanR" x1=".3" y1="0" x2=".7" y2="1"><stop offset="0" stop-color="#858b8d"/><stop offset=".45" stop-color="#b4b8b5"/><stop offset="1" stop-color="#cbccc7"/></linearGradient>
<linearGradient id="cshirt" x1="0" y1="0" x2="1" y2="0"><stop offset="0" stop-color="#c4b59e"/><stop offset=".5" stop-color="#d3c6b1"/><stop offset="1" stop-color="#dccfbb"/></linearGradient>
<linearGradient id="ccol" x1="0" y1="0" x2="1" y2="1"><stop offset="0" stop-color="#5a5f63"/><stop offset=".5" stop-color="#3a3e42"/><stop offset="1" stop-color="#232528"/></linearGradient>
<radialGradient id="cwl" cx=".5" cy=".5" r=".7"><stop offset="0" stop-color="#ffffff"/><stop offset="1" stop-color="#f3f3f3"/></radialGradient>
</defs>
<g filter="url(#cb1)">
<rect width="982" height="554" fill="#46494c"/>
<!-- upper left -->
<path d="M0 0H274L146 30L81 73L20 130L0 150Z" fill="#7d8285"/>
<path d="M81 73L146 30L183 18L274 0L345 61L219 81L172 99L85 89Z" fill="url(#cvL)"/>
<path d="M20 130L80 77L85 89L172 99L158 107L97 140L28 156L23 142Z" fill="url(#ctanL)"/>
<path d="M85 89L172 99L158 107L120 100Z" fill="#2f3134"/>
<!-- hinge L -->
<path d="M146 6L176 0L180 18L160 30L148 22Z" fill="#8d9597"/>
<!-- console -->
<path d="M274 0H560L562 38L491 54L357 71L345 61Z" fill="#232427"/>
<ellipse cx="333" cy="27" rx="18" ry="9" fill="#131416"/>
<path d="M558 0H665L623 30L618 60L491 55L562 38Z" fill="#3f4246"/>
<!-- right visor -->
<path d="M621 30L661 0H807L880 67L872 77L783 95L633 61Z" fill="url(#cvR)"/>
<path d="M807 0H958L982 61V114L947 148L905 150L828 110L783 95L872 77L880 67Z" fill="url(#ctanR)"/>
<path d="M783 95L872 77L876 71L800 86Z" fill="#2a2c2f"/>
<path d="M958 0H982V70Z" fill="#2b3436"/>
<path d="M748 0L790 0L796 12L770 16L752 8Z" fill="#8e9698"/>
<!-- headliner -->
<path d="M158 107L219 81L345 63L357 71L491 56L633 61L775 95L826 110L734 136L732 162L491 152L237 162L236 134Z" fill="url(#chl)"/>
<rect x="455" y="85" width="50" height="6" rx="2" fill="#e8e8e4"/>
<!-- cb mic + cord -->
<path d="M548 60C550 76 556 88 572 92C584 92 590 80 596 70" stroke="#17181a" stroke-width="10" fill="none"/>
<rect x="566" y="62" width="46" height="16" rx="4" fill="#1d1e20"/>
<path d="M622 62C630 80 632 100 626 112C618 122 604 118 598 108C592 98 586 96 580 92" stroke="#1a1b1d" stroke-width="11" fill="none" stroke-linecap="round"/><path d="M622 62C630 80 632 100 626 112C618 122 604 118 598 108C592 98 586 96 580 92" stroke="#3a3b3e" stroke-width="9" fill="none" stroke-dasharray="1.5 2.5"/>
<!-- corner pieces -->
<path d="M97 140L150 110L236 134L237 162L183 162L166 154Z" fill="#26272a"/>
<path d="M732 162L734 136L826 110L905 150L795 158Z" fill="#26272a"/>
<rect x="172" y="134" width="38" height="17" rx="4" fill="#7f8285" transform="rotate(12 191 142)"/>
<circle cx="187" cy="144" r="4" fill="#e6e6e6"/>
<rect x="762" y="134" width="38" height="17" rx="4" fill="#7f8285" transform="rotate(-10 781 142)"/>
<circle cx="784" cy="144" r="4" fill="#e6e6e6"/>
<rect x="832" y="112" width="44" height="12" fill="#c9cbc9" transform="rotate(22 854 118)"/>
<rect x="872" y="132" width="38" height="12" fill="#d5d6d4" transform="rotate(22 891 138)"/>
<path d="M908 150C912 190 910 220 906 240" stroke="#2a2b2d" stroke-width="2.5" fill="none"/>
<!-- trim under headliner -->
<path d="M237 160L491 150L732 160L740 178L491 170L237 180Z" fill="#3b3d40"/>
<!-- left pillar / upper door area -->
<path d="M0 150L28 156L97 140L166 154L183 162L190 205L60 205L10 280L0 300Z" fill="#474a4d"/>
<!-- sleeper interior -->
<path d="M243 277L249 196Q252 176 284 172L491 166L700 172Q744 176 748 200L756 300L700 460L250 460Z" fill="#2f3033"/>
<path d="M243 300L249 196Q252 176 284 172L491 166L700 172Q740 176 746 200" stroke="#7d7a73" stroke-width="9" fill="none"/>
<!-- curtain in sleeper -->
<path d="M262 186L312 184L286 233L272 290L256 290Z" fill="#858079"/>
<path d="M286 186L300 185L276 250L270 250Z" fill="#5f5b55"/>
<!-- back panel -->
<rect x="397" y="193" width="182" height="92" rx="12" fill="#484a4f"/>
<path d="M579 230L640 215L650 300L579 290Z" fill="#403f45"/>
<!-- passenger seat -->
<path d="M280 236Q282 226 296 226L350 224Q362 224 363 236L368 300L276 300Z" fill="#1a1b1e"/>
<path d="M296 232L350 230" stroke="#4a4b50" stroke-width="3"/>
<path d="M365 297L396 301L398 399L375 415Z" fill="#141517"/>
<!-- bed -->
<path d="M393 300L545 300L545 450L393 450Z" fill="#17183f"/>
<path d="M428 300L450 280L500 268L545 262L570 290L566 326L500 324L440 318Z" fill="#8f92a0"/>
<path d="M460 285L520 272L548 290L500 306Z" fill="#d0d2d8"/>
<path d="M520 300L560 296L562 318L530 320Z" fill="#3a3b4a"/>
<!-- curtain black left of seat -->
<path d="M183 162L237 162L243 277L254 358L229 380L203 277Z" fill="#242528"/>
<!-- left window -->
<path d="M58 206Q60 198 80 198L172 196Q182 196 183 206L200 277L214 350L170 398L132 436L96 490L60 470L100 420L150 380L176 340L168 277L165 214L84 214Q72 214 66 226L20 300L8 420L0 440V300Z" fill="#8f9294"/>
<path d="M0 300L14 290L6 407L16 415L47 443L91 480L60 500L0 470Z" fill="#f6f6f5"/>
<path d="M66 212Q68 206 84 206L166 204Q174 204 175 212L179 277L191 344L163 391L126 429L91 480L47 443L16 415L6 407L14 290Z" fill="url(#cwl)"/>
<path d="M64 222C80 236 110 238 134 214" stroke="#b9b9bb" stroke-width="1.5" fill="none"/>
<!-- door panel -->
<path d="M91 480L126 429L163 391L191 344L205 348L223 378L246 460L230 504L142 522Z" fill="#3a3d40"/>
<path d="M126 429L150 400L166 404L140 440Z" fill="#26282a"/>
<path d="M190 420L215 380L232 384L240 420L215 432Z" fill="#1a1b1d"/>
<path d="M140 470L170 444L178 452L150 480Z" fill="#6c7175"/>
<path d="M82 468L106 444L116 452L92 480Z" fill="#d9d9d9"/>
<circle cx="172" cy="457" r="5" fill="#7a2226"/>
<path d="M132 506L156 478" stroke="#16171a" stroke-width="6" stroke-linecap="round"/>
<!-- window cable -->
<path d="M6 410C30 420 50 450 70 480C80 494 90 500 100 500" stroke="#3a3b3e" stroke-width="5" fill="none"/>
<!-- bag -->
<path d="M270 289L363 297L365 419L335 431L258 403L243 378L252 338Z" fill="#1d1a23"/>
<path d="M284 309L349 321" stroke="#c8c8cc" stroke-width="3"/>
<path d="M276 356L325 351L326 366L277 371Z" fill="#e9e9ea"/>
<text x="272" y="348" font-size="9" font-weight="bold" font-style="italic" fill="#c0202a" font-family="Liberation Sans,sans-serif" transform="rotate(4 272 348)">Tellfy</text>
<!-- plastic bag, tablet, box -->
<path d="M381 415L410 445L396 462L365 457Z" fill="#d6d6d8"/>
<path d="M256 407L282 399L333 445L359 516L316 508L270 439Z" fill="#7c8588"/>
<path d="M264 412L280 407L326 449L346 505L322 500L276 437Z" fill="#98a1a3"/>
<path d="M237 459L272 466L272 478L237 475Z" fill="#2c2d30"/>
<path d="M262 486C276 492 286 496 296 498" stroke="#a11d22" stroke-width="2" fill="none"/>
<path d="M243 405L300 420L330 470L380 470L400 520L300 500L246 470Z" fill="#1b1c1f" opacity=".85"/>
<path d="M256 407L282 399L333 445L359 516L316 508L270 439Z" fill="#7c8588"/>
<path d="M266 412L280 407L324 449L344 503L322 499L278 437Z" fill="#929b9d"/>
<!-- cooler -->
<path d="M412 449L491 445L538 453L550 496L546 549L491 554L406 531L404 480Z" fill="#c3c4c4"/>
<path d="M414 452L491 448L536 456L540 478L408 478Z" fill="#dadbdb"/>
<path d="M440 512H462V528H440Z" fill="#8a8b8c"/>
<!-- shifter -->
<ellipse cx="482" cy="497" rx="13" ry="8" fill="#141516"/>
<path d="M480 500L488 554H498L490 500Z" fill="#191a1b"/>
<!-- dash bottom-left -->
<path d="M0 462L20 449L71 474L142 520L223 502L304 498L406 522L491 543L560 554H0Z" fill="#e4e3df"/>
<path d="M230 520C300 520 380 536 450 554H330C300 540 260 528 230 520Z" fill="#c9c8c3"/>
<path d="M0 462L20 449L60 470L40 500L0 520Z" fill="#f1f1ef"/>
<!-- driver -->
<path d="M633 200C631 220 634 245 648 262L662 240L650 200Z" fill="#241c1c"/>
<path d="M613 280L633 264L694 270L724 280L745 277L755 307L779 362L807 399L749 419L751 439L674 445L633 470L588 468L568 447L542 423L525 382L538 338L558 303Z" fill="url(#cshirt)"/>
<path d="M540 330L556 306L574 312L560 340Z" fill="#77756c"/>
<path d="M538 399L592 391L674 439L670 453L613 447L552 429Z" fill="#dcb7a4"/>
<path d="M745 374L775 362L816 395L836 397L812 423L749 393Z" fill="#e2bfad"/><path d="M826 428L850 420L866 452L852 458L836 446Z" fill="#c99f90"/>
<path d="M790 402L812 396L816 408L796 414Z" fill="#2d2c2e"/>
<path d="M552 460L588 468L620 472L608 554L558 554Z" fill="#1b1c29"/>
<!-- belt -->
<path d="M764 205L772 208L730 280L716 276Z" fill="#3b3b3e"/>
<path d="M710 277L742 283L622 415L596 400Z" fill="#4c4c4f"/>
<!-- face blur -->
<ellipse cx="672" cy="232" rx="33" ry="42" fill="#c59d96" filter="url(#cb4)"/>
<ellipse cx="668" cy="194" rx="33" ry="13" fill="#8e2a36" filter="url(#cb4)"/>
<ellipse cx="690" cy="200" rx="16" ry="8" fill="#a84854" filter="url(#cb4)"/>
<path d="M636 206C630 226 632 248 642 258" stroke="#1c1a1b" stroke-width="4" fill="none"/>
<!-- right window frame and window -->
<path d="M771 195L800 200L880 200L945 216L970 277L982 330V554H840L876 510L860 456L800 400L779 354L763 277Z" fill="#8a8d90"/>
<path d="M796 208L870 209L935 224L958 277L974 360L968 420L982 430V554H850L880 520L870 470L840 430L800 390L790 300Z" fill="url(#cwl)"/>
<path d="M974 300C978 340 976 400 968 424L982 434V290Z" fill="#a4a8aa"/>
<path d="M906 240l-5 8 6 4" stroke="#333" stroke-width="2" fill="none"/>
<!-- right dash dark -->
<path d="M826 435L866 460L887 490L876 520L836 554L810 554L820 480Z" fill="#2b2d30"/>
<path d="M876 512L982 419" stroke="#3c3e42" stroke-width="7" fill="none"/>
<path d="M940 460L982 425" stroke="#55585c" stroke-width="5" fill="none"/>
<path d="M846 470L870 462L884 486L862 496Z" fill="#caccce"/>
<!-- steering column & wheel -->
<path d="M694 456L760 440L830 430L846 470L826 482L745 494L735 480Z" fill="#26282a"/>
<path d="M741 496L828 472L840 554L735 554Z" fill="url(#ccol)"/>
<ellipse cx="770" cy="425" rx="108" ry="22" transform="rotate(-14 770 425)" fill="none" stroke="#1d1f21" stroke-width="15"/>
<path d="M668 447C700 430 790 402 868 400" stroke="#3c3f42" stroke-width="3" fill="none"/>
<path d="M750 448L790 440L796 452L762 462Z" fill="#8c9194"/>
<path d="M700 520L738 506" stroke="#55585a" stroke-width="6" stroke-linecap="round"/>
<!-- phone -->
<path d="M621 460Q624 452 633 451L708 457Q720 459 720 470L676 554H610L598 541L613 480Z" fill="#474c48"/>
<rect x="620" y="468" width="44" height="30" rx="8" fill="#2f3331" transform="rotate(4 642 483)"/>
<circle cx="634" cy="478" r="6" fill="#17191a"/><circle cx="650" cy="477" r="6" fill="#17191a"/><circle cx="640" cy="490" r="6" fill="#17191a"/>
<path d="M625 520L678 527L663 554L633 554Z" fill="#2e3134"/>
<path d="M632 524L672 529L668 540L640 538Z" fill="#a9adb0"/>
</g>
</svg>

</div>
<!-- speed -->
<div class="abs" style="left:32px;top:626px;width:130px;height:180px;border-radius:7px;background:rgba(48,48,51,.79)"></div>
<div class="t" id="spd" style="left:32px;top:639px;width:130px;text-align:center;font-size:55px;color:#fff;letter-spacing:2px;text-indent:2px">52</div>
<div class="t" id="mph" style="left:32px;top:695px;width:130px;text-align:center;font-size:26.5px;color:#fff;letter-spacing:.9px;text-indent:.9px">mph</div>
<div class="abs" style="left:76px;top:736px;width:40px;height:4px;background:#727275"></div>
<div class="t" id="lim" style="left:31.4px;top:760px;width:130px;text-align:center;font-family:'DejaVu Sans','Liberation Sans',sans-serif;font-size:21.5px;font-weight:bold;color:#fff;letter-spacing:-.3px">LIMIT 70</div>
<!-- timestamp -->
<div class="t" id="ts" style="left:1696.5px;top:644px;font-size:28px;font-weight:bold;color:#fff;letter-spacing:1.9px">8:50:25 AM</div>
<div class="t" id="tz" style="left:1878.5px;top:644px;font-size:28px;color:#c5cdd9;letter-spacing:-1.2px">PDT</div>
<!-- bottom icons -->
<div class="abs" style="left:1806px;top:1720px;width:48px;height:48px;border-radius:13px;background:#fff"></div>
<div class="abs" style="left:1812px;top:1731px;width:16px;height:11px;border-radius:1.5px;background:#17181c"></div>
<div class="abs" style="left:1832px;top:1731px;width:16px;height:11px;border-radius:1.5px;background:#17181c"></div>
<div class="abs" style="left:1812px;top:1746px;width:16px;height:11px;border-radius:1.5px;background:#17181c"></div>
<div class="abs" style="left:1832px;top:1746px;width:16px;height:11px;border-radius:1.5px;background:#17181c"></div>
<svg class="abs" style="left:1886px;top:1720px" width="48" height="48" viewBox="0 0 24 24" fill="#fff"><path d="M7 14H5v5h5v-2H7v-3zm-2-4h2V7h3V5H5v5zm12 7h-3v2h5v-5h-2v3zM14 5v2h3v3h2V5h-5z"/></svg>

</div>

<!-- ================= RIGHT PANEL ================= -->
<div id="panel">
<div class="btn" style="left:48px;top:48px;width:80px;height:80px"><svg class="abs" style="left:14px;top:14px" width="48" height="48" viewBox="0 0 24 24" fill="#17181c"><path d="M15.410 7.410L14 6l-6 6 6 6 1.410-1.410L10.830 12z"/></svg></div>
<div class="btn" style="left:144px;top:48px;width:236px;height:80px"><svg class="abs" style="left:32px;top:14px" width="48" height="48" viewBox="0 0 24 24" fill="#17181c"><path d="M10 6L8.590 7.410 13.170 12l-4.580 4.590L10 18l6-6z"/></svg></div>
<div class="t" id="nt" style="left:234.5px;top:76.6px;font-size:25px;letter-spacing:1.05px">Next Trip</div>
<div class="t" id="lt" style="left:563px;top:76px;font-size:28.5px;letter-spacing:1.45px"><u>Latest Trip</u></div>
<div class="t" id="hd" style="left:48px;top:176.6px;font-size:38px;font-weight:bold;letter-spacing:1.25px">May 4, 8:35 AM PDT</div>
<svg class="abs" style="left:49.7px;top:252.6px" width="37.2" height="37.2" viewBox="0 0 24 24" fill="#17181c"><path d="M12 12c2.210 0 4-1.790 4-4s-1.790-4-4-4-4 1.790-4 4 1.790 4 4 4zm0 2c-2.670 0-8 1.340-8 4v2h16v-2c0-2.660-5.330-4-8-4z"/></svg>
<div class="t" id="drv" style="left:119.5px;top:255px;font-size:30px;letter-spacing:.25px">George<span style="margin-left:5.5px;letter-spacing:.3px">(<u>Reassign</u>)</span></div>
<svg class="abs" style="left:49.7px;top:318.3px" width="37.2" height="35.5" preserveAspectRatio="none" viewBox="0 0 24 24" fill="#17181c"><path d="M4 16c0 .880.390 1.670 1 2.220V20c0 .550.450 1 1 1h1c.550 0 1-.450 1-1v-1h8v1c0 .550.450 1 1 1h1c.550 0 1-.450 1-1v-1.780c.610-.550 1-1.340 1-2.220V6c0-3.500-3.580-4-8-4s-8 .500-8 4v10zm3.500 1c-.830 0-1.500-.670-1.500-1.500S6.670 14 7.500 14s1.500.670 1.500 1.500S8.330 17 7.500 17zm9 0c-.830 0-1.500-.670-1.500-1.500s.670-1.500 1.500-1.500 1.500.670 1.500 1.500-.670 1.500-1.500 1.500zm1.500-6H6V6h12v5z"/></svg>
<div class="t" id="veh" style="left:120px;top:321.4px;font-size:28.5px;letter-spacing:.9px"><u>832</u></div>
<!-- map -->
<div class="abs" style="left:48px;top:392px;width:664px;height:370px;border-radius:12px;overflow:hidden;background:#eef0f8;will-change:transform">
<svg class="abs" style="left:0;top:0" width="664" height="370" viewBox="0 0 664 370" font-family="Liberation Sans,sans-serif">
<defs>
<pattern id="mg1" width="25" height="22" patternUnits="userSpaceOnUse"><path d="M0 .8H25M.8 0V22M13 0V11" stroke="#fff" stroke-width="1.7"/></pattern>
<pattern id="mg2" width="14" height="22" patternUnits="userSpaceOnUse" patternTransform="rotate(-38)"><path d="M0 .8H14M.8 0V22" stroke="#fff" stroke-width="1.6"/></pattern>
<pattern id="mg3" width="41" height="35" patternUnits="userSpaceOnUse" patternTransform="rotate(3)"><path d="M0 .8H41M.8 0V35" stroke="#fff" stroke-width="1.7"/></pattern>
<filter id="msh" x="-20%" y="-20%" width="140%" height="140%"><feGaussianBlur stdDeviation="2"/></filter>
</defs>
<rect width="664" height="370" fill="#f1f3fa"/>
<path d="M216.8 245.400L225 245.400L219.500 281L238.700 281L233.200 294.800L219.500 341.400L203 341.400L211.300 308.500L201.700 294.800L201.700 283.800L214 281Z" fill="#dde9cf"/>
<path d="M332 86L352 92L352 106L332 100Z" fill="#dde9cf"/>
<path d="M404 100L446 122L440 130L400 110Z" fill="#dde9cf"/>
<path d="M197 140L220 138L218 156L197 158Z" fill="#dde9cf"/>
<path d="M142 118L152 122L148 130L140 128Z" fill="#dde9cf"/>
<path d="M554 196L586 198L578 224L560 232L546 222Z" fill="#dde9cf"/>
<path d="M384 250L406 248L406 262L384 262Z" fill="#dde9cf"/>
<path d="M346 250L360 246L362 260L348 262Z" fill="#dde9cf"/>
<path d="M563 268L590 262L596 282L572 290Z" fill="#dde9cf"/>
<path d="M640 278L652 278L652 306L640 306Z" fill="#dde9cf"/>
<path d="M530 130L550 136L538 146L526 140Z" fill="#dde9cf"/>
<path d="M370 322L382 322L378 336L368 334Z" fill="#dde9cf"/>
<path d="M504 332L520 330L518 344L506 346Z" fill="#dde9cf"/>
<path d="M40 350L120 346L118 366L40 366Z" fill="#dde9cf"/>
<path d="M312 60L332 58V80L318 84Z" fill="#dde9cf"/>
<path d="M586 12L604 10L600 24L588 22Z" fill="#dde9cf"/>
<rect width="664" height="370" fill="url(#mg3)"/>
<path d="M110 40H300V165H110ZM0 185H330V370H0ZM330 190H664V345H330Z" fill="url(#mg1)"/>
<path d="M400 40L520 40L600 120L560 170L470 130L410 100Z" fill="url(#mg2)"/>
<path d="M470 240L530 230L590 330L520 340Z" fill="url(#mg2)" opacity=".9"/>
<path d="M215 56L222 75L226 98L242 117L252 143" stroke="#fff" stroke-width="1.8" fill="none"/>
<path d="M629 233L648 254L650 291L657 310L677 329" stroke="#fff" stroke-width="1.8" fill="none"/>
<path d="M386 236L418 245L445 258L465 285L484 297" stroke="#fff" stroke-width="1.8" fill="none"/>
<path d="M518 30L543 55L577 66L608 75L625 89" stroke="#fff" stroke-width="1.8" fill="none"/>
<path d="M508 212L529 228L540 244L566 257L581 282" stroke="#fff" stroke-width="1.8" fill="none"/>
<path d="M452 165L446 183L442 203L455 223L472 251" stroke="#fff" stroke-width="1.8" fill="none"/>
<path d="M54 166L74 168L108 174L132 182L153 177" stroke="#fff" stroke-width="1.8" fill="none"/>
<path d="M8 308L13 334L26 369L33 400L33 437" stroke="#fff" stroke-width="1.8" fill="none"/>
<path d="M518 324L544 328L562 335L584 336L599 325" stroke="#fff" stroke-width="1.8" fill="none"/>
<path d="M67 135L87 121L123 110L142 99L170 104" stroke="#fff" stroke-width="1.8" fill="none"/>
<path d="M96 277L93 299L113 325L137 335L169 358" stroke="#fff" stroke-width="1.8" fill="none"/>
<path d="M462 97L470 119L476 150L480 184L490 208" stroke="#fff" stroke-width="1.8" fill="none"/>
<path d="M533 74L523 89L515 121L493 145L454 147" stroke="#fff" stroke-width="1.8" fill="none"/>
<path d="M146 84L152 123L153 161L161 196L179 221" stroke="#fff" stroke-width="1.8" fill="none"/>
<path d="M132 329L109 344L83 340L57 326L36 317" stroke="#fff" stroke-width="1.8" fill="none"/>
<path d="M536 54L555 75L566 90L566 120L552 152" stroke="#fff" stroke-width="1.8" fill="none"/>
<path d="M549 78L575 93L604 101L637 89L672 86" stroke="#fff" stroke-width="1.8" fill="none"/>
<path d="M549 325L548 343L549 361L542 388L525 409" stroke="#fff" stroke-width="1.8" fill="none"/>
<path d="M344 206L361 216L381 213L411 201L436 177" stroke="#fff" stroke-width="1.8" fill="none"/>
<path d="M132 103L159 117L189 140L217 153L233 167" stroke="#fff" stroke-width="1.8" fill="none"/>
<path d="M294 27L296 51L314 84L323 106L344 130" stroke="#fff" stroke-width="1.8" fill="none"/>
<path d="M62 327L42 345L28 367L24 401L37 426" stroke="#fff" stroke-width="1.8" fill="none"/>
<path d="M12 123L51 125L70 146L94 150L127 140" stroke="#fff" stroke-width="1.8" fill="none"/>
<path d="M564 250L587 268L607 283L619 316L632 329" stroke="#fff" stroke-width="1.8" fill="none"/>
<path d="M173 225L192 249L212 278L229 294L249 299" stroke="#fff" stroke-width="1.8" fill="none"/>
<path d="M33 75L51 93L72 111L85 129L108 153" stroke="#fff" stroke-width="1.8" fill="none"/>
<path d="M341 91L331 117L320 143L310 180L306 214" stroke="#fff" stroke-width="1.8" fill="none"/>
<path d="M422 150L429 168L431 195L449 217L471 243" stroke="#fff" stroke-width="1.8" fill="none"/>
<path d="M460 17L471 38L466 68L472 93L478 118" stroke="#fff" stroke-width="1.8" fill="none"/>
<path d="M315 186L326 205L324 236L325 268L346 299" stroke="#fff" stroke-width="1.8" fill="none"/>
<path d="M103 330L128 339L161 332L187 306L215 285" stroke="#fff" stroke-width="1.8" fill="none"/>
<path d="M93 194L125 201L153 222L164 241L190 265" stroke="#fff" stroke-width="1.8" fill="none"/>
<path d="M250 167L281 172L299 177L326 190L341 211" stroke="#fff" stroke-width="1.8" fill="none"/>
<path d="M167 28L198 38L221 60L259 63L288 54" stroke="#fff" stroke-width="1.8" fill="none"/>
<path d="M398 123L383 147L382 171L374 203L374 231" stroke="#fff" stroke-width="1.8" fill="none"/>
<path d="M310 44L349 43L372 23L400 22L436 13" stroke="#fff" stroke-width="1.8" fill="none"/>
<path d="M386 52L412 54L436 59L464 61L486 58" stroke="#fff" stroke-width="1.8" fill="none"/>
<path d="M453 150L455 175L449 208L435 236L403 249" stroke="#fff" stroke-width="1.8" fill="none"/>
<path d="M247 208.300L260.700 207.600L278.500 223.400L278.500 233L264.800 239.900L256.600 242.600L253.800 261.800L244.200 272.800L233.200 281L219.500 281L220.900 267.300L225 245.400L226.400 230.300L236 226.200L238.700 215.200Z" fill="#bcc9e4"/>
<path d="M0 103.0L3.0 95L10 97.5L8.5 105Z" fill="#bfcbe6"/>
<path d="M166 125.6L169.6 116L178 119.0L176.2 128Z" fill="#bfcbe6"/>
<path d="M177 129.0L180.0 121L187 123.5L185.5 131Z" fill="#bfcbe6"/>
<path d="M162 119.4L164.4 113L170 115.0L168.8 121Z" fill="#bfcbe6"/>
<path d="M230 113.6L233.6 104L242 107.0L240.2 116Z" fill="#bfcbe6"/>
<path d="M204 135.4L206.4 129L212 131.0L210.8 137Z" fill="#bfcbe6"/>
<path d="M271 155.0L274.0 147L281 149.5L279.5 157Z" fill="#bfcbe6"/>
<path d="M275 179.6L278.6 170L287 173.0L285.2 182Z" fill="#bfcbe6"/>
<path d="M120 1.8L121.8 -3L126 -1.5L125.1 3Z" fill="#bfcbe6"/>
<path d="M109 87.8L110.8 83L115 84.5L114.1 89Z" fill="#bfcbe6"/>
<path d="M555 333.6L558.6 324L567 327.0L565.2 336Z" fill="#bfcbe6"/>
<path d="M565 282.2L569.2 271L579 274.5L576.9 285Z" fill="#bfcbe6"/>
<path d="M351 26.4L353.4 20L359 22.0L357.8 28Z" fill="#bfcbe6"/>
<path d="M335 9.0L338.0 1L345 3.5L343.5 11Z" fill="#bfcbe6"/>
<path d="M573 329.0L576.0 321L583 323.5L581.5 331Z" fill="#bfcbe6"/>
<path d="M554 293.8L555.8 289L560 290.5L559.1 295Z" fill="#bfcbe6"/>
<path d="M523 217.8L524.8 213L529 214.5L528.1 219Z" fill="#bfcbe6"/>
<path d="M559 212.4L561.4 206L567 208.0L565.8 214Z" fill="#bfcbe6"/>
<path d="M592 16.4L594.4 10L600 12.0L598.8 18Z" fill="#bfcbe6"/>
<path d="M7 121.8L8.8 117L13 118.5L12.1 123Z" fill="#bfcbe6"/>
<path d="M0.0 33.0L20.0 32.0L100.0 35.0L162.0 36.0L240.0 35.0L300.0 34.0L316.0 24.0L332.0 12.0L345.0 0.0" stroke="#ecd9a0" stroke-width="6.4" fill="none" stroke-linejoin="round" stroke-linecap="round"/>
<path d="M13.7 35.0L34.3 0.0" stroke="#ecd9a0" stroke-width="6.4" fill="none" stroke-linejoin="round" stroke-linecap="round"/>
<path d="M90.5 0.0L98.8 24.7L99.9 65.9L109.8 82.3L101.5 123.5L100.2 164.6L97.0 185.0L96.7 370.0" stroke="#ecd9a0" stroke-width="6.4" fill="none" stroke-linejoin="round" stroke-linecap="round"/>
<path d="M127.6 0.0L127.6 27.4" stroke="#ecd9a0" stroke-width="6.4" fill="none" stroke-linejoin="round" stroke-linecap="round"/>
<path d="M162.6 0.0L162.6 116.6L148.0 137.0L145.4 185.0L145.0 200.0" stroke="#ecd9a0" stroke-width="6.4" fill="none" stroke-linejoin="round" stroke-linecap="round"/>
<path d="M0.0 170.0L100.0 168.0L145.0 171.0L219.5 170.0L260.0 162.0L308.7 156.4L332.0 157.8" stroke="#ecd9a0" stroke-width="6.4" fill="none" stroke-linejoin="round" stroke-linecap="round"/>
<path d="M300.0 0.0L314.0 20.6L301.8 65.9L301.8 98.8L311.4 155.0" stroke="#ecd9a0" stroke-width="6.4" fill="none" stroke-linejoin="round" stroke-linecap="round"/>
<path d="M290.0 0.0L316.0 23.0L340.0 40.0L373.0 64.5L380.0 66.0" stroke="#ecd9a0" stroke-width="6.4" fill="none" stroke-linejoin="round" stroke-linecap="round"/>
<path d="M350.0 0.0L366.0 20.6L371.8 41.0L378.6 66.0" stroke="#ecd9a0" stroke-width="6.4" fill="none" stroke-linejoin="round" stroke-linecap="round"/>
<path d="M332.0 16.0L350.0 8.0L352.0 0.0" stroke="#ecd9a0" stroke-width="6.4" fill="none" stroke-linejoin="round" stroke-linecap="round"/>
<path d="M404.7 78.2L428.0 93.3L452.7 101.5L459.6 123.5L462.3 130.3" stroke="#ecd9a0" stroke-width="6.4" fill="none" stroke-linejoin="round" stroke-linecap="round"/>
<path d="M458.2 0.0L452.7 54.9L452.7 89.2L455.5 101.5" stroke="#ecd9a0" stroke-width="6.4" fill="none" stroke-linejoin="round" stroke-linecap="round"/>
<path d="M520.0 0.0L510.4 34.3L488.4 82.3L488.4 109.8L493.9 127.6" stroke="#ecd9a0" stroke-width="6.4" fill="none" stroke-linejoin="round" stroke-linecap="round"/>
<path d="M463.7 126.2L484.3 109.8" stroke="#ecd9a0" stroke-width="6.4" fill="none" stroke-linejoin="round" stroke-linecap="round"/>
<path d="M493.9 127.6L514.5 131.7L531.0 116.6L554.3 113.9L583.0 109.8L625.6 108.4L664.0 98.8" stroke="#ecd9a0" stroke-width="6.4" fill="none" stroke-linejoin="round" stroke-linecap="round"/>
<path d="M373.0 155.0L414.3 160.5L436.3 153.7L459.6 155.0" stroke="#ecd9a0" stroke-width="6.4" fill="none" stroke-linejoin="round" stroke-linecap="round"/>
<path d="M462.0 130.0L469.0 157.8L473.3 171.5L466.4 185.0L463.7 198.7L445.9 205.6L441.8 226.2L434.9 257.7L414.3 281.0L397.9 308.5L373.2 344.1L360.0 370.0" stroke="#ecd9a0" stroke-width="6.4" fill="none" stroke-linejoin="round" stroke-linecap="round"/>
<path d="M500.0 140.0L509.0 153.7L524.0 185.0L529.6 212.4L537.8 226.2L543.3 257.7L554.3 294.8L585.8 337.3L599.5 370.0" stroke="#ecd9a0" stroke-width="6.4" fill="none" stroke-linejoin="round" stroke-linecap="round"/>
<path d="M514.5 157.8L535.0 185.0L537.8 185.0L539.2 226.2" stroke="#ecd9a0" stroke-width="6.4" fill="none" stroke-linejoin="round" stroke-linecap="round"/>
<path d="M595.4 0.0L600.9 13.7L625.0 40.0L647.5 76.8L650.3 123.5L649.0 185.0L648.9 247.0" stroke="#ecd9a0" stroke-width="6.4" fill="none" stroke-linejoin="round" stroke-linecap="round"/>
<path d="M546.0 0.0L565.2 6.9L592.7 0.0" stroke="#ecd9a0" stroke-width="6.4" fill="none" stroke-linejoin="round" stroke-linecap="round"/>
<path d="M0.0 256.3L57.6 259.0L82.3 250.9L144.0 253.6L196.2 256.3L205.8 263.2L253.8 259.8L274.4 261.8L300.0 262.0" stroke="#ecd9a0" stroke-width="6.4" fill="none" stroke-linejoin="round" stroke-linecap="round"/>
<path d="M0.0 312.6L96.0 311.2L168.7 314.0L198.9 318.0L246.9 322.2L295.0 323.6L332.0 334.5L352.6 344.1L372.0 370.0" stroke="#ecd9a0" stroke-width="6.4" fill="none" stroke-linejoin="round" stroke-linecap="round"/>
<path d="M156.4 198.7L159.1 219.3L150.9 245.4L152.3 305.7" stroke="#ecd9a0" stroke-width="6.4" fill="none" stroke-linejoin="round" stroke-linecap="round"/>
<path d="M311.4 239.9L332.0 261.8L337.5 274.2L345.7 286.5L428.0 287.9L450.0 297.5L470.6 303.0L496.6 294.8L592.7 250.9L647.5 249.5L664.0 249.0" stroke="#ecd9a0" stroke-width="6.4" fill="none" stroke-linejoin="round" stroke-linecap="round"/>
<path d="M277.1 272.8L273.0 292.0L264.8 305.7L264.8 329.0" stroke="#ecd9a0" stroke-width="6.4" fill="none" stroke-linejoin="round" stroke-linecap="round"/>
<path d="M434.9 260.5L444.5 274.2L445.9 308.5L445.9 370.0" stroke="#ecd9a0" stroke-width="6.4" fill="none" stroke-linejoin="round" stroke-linecap="round"/>
<path d="M495.3 297.5L503.5 315.3L502.1 370.0" stroke="#ecd9a0" stroke-width="6.4" fill="none" stroke-linejoin="round" stroke-linecap="round"/>
<path d="M526.8 193.2L585.8 194.6L613.2 219.3L647.5 246.7" stroke="#ecd9a0" stroke-width="6.4" fill="none" stroke-linejoin="round" stroke-linecap="round"/>
<path d="M585.8 337.3L627.0 315.3L664.0 307.1" stroke="#ecd9a0" stroke-width="6.4" fill="none" stroke-linejoin="round" stroke-linecap="round"/>
<path d="M308.0 163.0L306.0 200.0L304.0 242.0" stroke="#ecd9a0" stroke-width="6.4" fill="none" stroke-linejoin="round" stroke-linecap="round"/>
<path d="M20.0 370.0L40.0 340.0L0.0 330.0" stroke="#ecd9a0" stroke-width="6.4" fill="none" stroke-linejoin="round" stroke-linecap="round"/>
<path d="M0.0 33.0L20.0 32.0L100.0 35.0L162.0 36.0L240.0 35.0L300.0 34.0L316.0 24.0L332.0 12.0L345.0 0.0" stroke="#fbf1c9" stroke-width="4" fill="none" stroke-linejoin="round" stroke-linecap="round"/>
<path d="M13.7 35.0L34.3 0.0" stroke="#fbf1c9" stroke-width="4" fill="none" stroke-linejoin="round" stroke-linecap="round"/>
<path d="M90.5 0.0L98.8 24.7L99.9 65.9L109.8 82.3L101.5 123.5L100.2 164.6L97.0 185.0L96.7 370.0" stroke="#fbf1c9" stroke-width="4" fill="none" stroke-linejoin="round" stroke-linecap="round"/>
<path d="M127.6 0.0L127.6 27.4" stroke="#fbf1c9" stroke-width="4" fill="none" stroke-linejoin="round" stroke-linecap="round"/>
<path d="M162.6 0.0L162.6 116.6L148.0 137.0L145.4 185.0L145.0 200.0" stroke="#fbf1c9" stroke-width="4" fill="none" stroke-linejoin="round" stroke-linecap="round"/>
<path d="M0.0 170.0L100.0 168.0L145.0 171.0L219.5 170.0L260.0 162.0L308.7 156.4L332.0 157.8" stroke="#fbf1c9" stroke-width="4" fill="none" stroke-linejoin="round" stroke-linecap="round"/>
<path d="M300.0 0.0L314.0 20.6L301.8 65.9L301.8 98.8L311.4 155.0" stroke="#fbf1c9" stroke-width="4" fill="none" stroke-linejoin="round" stroke-linecap="round"/>
<path d="M290.0 0.0L316.0 23.0L340.0 40.0L373.0 64.5L380.0 66.0" stroke="#fbf1c9" stroke-width="4" fill="none" stroke-linejoin="round" stroke-linecap="round"/>
<path d="M350.0 0.0L366.0 20.6L371.8 41.0L378.6 66.0" stroke="#fbf1c9" stroke-width="4" fill="none" stroke-linejoin="round" stroke-linecap="round"/>
<path d="M332.0 16.0L350.0 8.0L352.0 0.0" stroke="#fbf1c9" stroke-width="4" fill="none" stroke-linejoin="round" stroke-linecap="round"/>
<path d="M404.7 78.2L428.0 93.3L452.7 101.5L459.6 123.5L462.3 130.3" stroke="#fbf1c9" stroke-width="4" fill="none" stroke-linejoin="round" stroke-linecap="round"/>
<path d="M458.2 0.0L452.7 54.9L452.7 89.2L455.5 101.5" stroke="#fbf1c9" stroke-width="4" fill="none" stroke-linejoin="round" stroke-linecap="round"/>
<path d="M520.0 0.0L510.4 34.3L488.4 82.3L488.4 109.8L493.9 127.6" stroke="#fbf1c9" stroke-width="4" fill="none" stroke-linejoin="round" stroke-linecap="round"/>
<path d="M463.7 126.2L484.3 109.8" stroke="#fbf1c9" stroke-width="4" fill="none" stroke-linejoin="round" stroke-linecap="round"/>
<path d="M493.9 127.6L514.5 131.7L531.0 116.6L554.3 113.9L583.0 109.8L625.6 108.4L664.0 98.8" stroke="#fbf1c9" stroke-width="4" fill="none" stroke-linejoin="round" stroke-linecap="round"/>
<path d="M373.0 155.0L414.3 160.5L436.3 153.7L459.6 155.0" stroke="#fbf1c9" stroke-width="4" fill="none" stroke-linejoin="round" stroke-linecap="round"/>
<path d="M462.0 130.0L469.0 157.8L473.3 171.5L466.4 185.0L463.7 198.7L445.9 205.6L441.8 226.2L434.9 257.7L414.3 281.0L397.9 308.5L373.2 344.1L360.0 370.0" stroke="#fbf1c9" stroke-width="4" fill="none" stroke-linejoin="round" stroke-linecap="round"/>
<path d="M500.0 140.0L509.0 153.7L524.0 185.0L529.6 212.4L537.8 226.2L543.3 257.7L554.3 294.8L585.8 337.3L599.5 370.0" stroke="#fbf1c9" stroke-width="4" fill="none" stroke-linejoin="round" stroke-linecap="round"/>
<path d="M514.5 157.8L535.0 185.0L537.8 185.0L539.2 226.2" stroke="#fbf1c9" stroke-width="4" fill="none" stroke-linejoin="round" stroke-linecap="round"/>
<path d="M595.4 0.0L600.9 13.7L625.0 40.0L647.5 76.8L650.3 123.5L649.0 185.0L648.9 247.0" stroke="#fbf1c9" stroke-width="4" fill="none" stroke-linejoin="round" stroke-linecap="round"/>
<path d="M546.0 0.0L565.2 6.9L592.7 0.0" stroke="#fbf1c9" stroke-width="4" fill="none" stroke-linejoin="round" stroke-linecap="round"/>
<path d="M0.0 256.3L57.6 259.0L82.3 250.9L144.0 253.6L196.2 256.3L205.8 263.2L253.8 259.8L274.4 261.8L300.0 262.0" stroke="#fbf1c9" stroke-width="4" fill="none" stroke-linejoin="round" stroke-linecap="round"/>
<path d="M0.0 312.6L96.0 311.2L168.7 314.0L198.9 318.0L246.9 322.2L295.0 323.6L332.0 334.5L352.6 344.1L372.0 370.0" stroke="#fbf1c9" stroke-width="4" fill="none" stroke-linejoin="round" stroke-linecap="round"/>
<path d="M156.4 198.7L159.1 219.3L150.9 245.4L152.3 305.7" stroke="#fbf1c9" stroke-width="4" fill="none" stroke-linejoin="round" stroke-linecap="round"/>
<path d="M311.4 239.9L332.0 261.8L337.5 274.2L345.7 286.5L428.0 287.9L450.0 297.5L470.6 303.0L496.6 294.8L592.7 250.9L647.5 249.5L664.0 249.0" stroke="#fbf1c9" stroke-width="4" fill="none" stroke-linejoin="round" stroke-linecap="round"/>
<path d="M277.1 272.8L273.0 292.0L264.8 305.7L264.8 329.0" stroke="#fbf1c9" stroke-width="4" fill="none" stroke-linejoin="round" stroke-linecap="round"/>
<path d="M434.9 260.5L444.5 274.2L445.9 308.5L445.9 370.0" stroke="#fbf1c9" stroke-width="4" fill="none" stroke-linejoin="round" stroke-linecap="round"/>
<path d="M495.3 297.5L503.5 315.3L502.1 370.0" stroke="#fbf1c9" stroke-width="4" fill="none" stroke-linejoin="round" stroke-linecap="round"/>
<path d="M526.8 193.2L585.8 194.6L613.2 219.3L647.5 246.7" stroke="#fbf1c9" stroke-width="4" fill="none" stroke-linejoin="round" stroke-linecap="round"/>
<path d="M585.8 337.3L627.0 315.3L664.0 307.1" stroke="#fbf1c9" stroke-width="4" fill="none" stroke-linejoin="round" stroke-linecap="round"/>
<path d="M308.0 163.0L306.0 200.0L304.0 242.0" stroke="#fbf1c9" stroke-width="4" fill="none" stroke-linejoin="round" stroke-linecap="round"/>
<path d="M20.0 370.0L40.0 340.0L0.0 330.0" stroke="#fbf1c9" stroke-width="4" fill="none" stroke-linejoin="round" stroke-linecap="round"/>
<text x="225" y="86.4" font-size="30" font-weight="normal" fill="#3c3c3c" text-anchor="start" stroke="#f4f5fb" stroke-width="3" paint-order="stroke" stroke-linejoin="round" >Irving</text>
<text x="483.5" y="152.3" font-size="31.5" font-weight="bold" fill="#3a3a3a" text-anchor="middle" stroke="#f4f5fb" stroke-width="3" paint-order="stroke" stroke-linejoin="round" >Dallas</text>
<text x="110" y="202.8" font-size="27" font-weight="normal" fill="#3c3c3c" text-anchor="start" stroke="#f4f5fb" stroke-width="3" paint-order="stroke" stroke-linejoin="round" >Grand Prairie</text>
<text x="93" y="222.7" font-size="32" font-weight="normal" fill="#3c3c3c" text-anchor="end" stroke="#f4f5fb" stroke-width="3" paint-order="stroke" stroke-linejoin="round" >Arlington</text>
<text x="460" y="24.7" font-size="22" font-weight="normal" fill="#5b6066" text-anchor="start" stroke="#f4f5fb" stroke-width="3" paint-order="stroke" stroke-linejoin="round" >Park</text>
<text x="483" y="1" font-size="22" font-weight="normal" fill="#5b6066" text-anchor="middle" stroke="#f4f5fb" stroke-width="3" paint-order="stroke" stroke-linejoin="round" >University</text>
<text x="262" y="366" font-size="27" font-weight="normal" fill="#8a8a8a" text-anchor="start" stroke="#f4f5fb" stroke-width="3" paint-order="stroke" stroke-linejoin="round" >Duncanville</text>
<text x="558" y="369" font-size="27" font-weight="normal" fill="#8a8a8a" text-anchor="start" stroke="#f4f5fb" stroke-width="3" paint-order="stroke" stroke-linejoin="round" >Hutchins</text>
<rect x="269" y="-14" width="40.39999999999998" height="29" rx="13.2" fill="#fff" stroke="#4a4a4a" stroke-width="1.8"/>
<text x="289.2" y="7.3" font-size="19" fill="#333" text-anchor="middle">114</text>
<rect x="76.4" y="252.2" width="41.3" height="27.5" rx="12.5" fill="#fff" stroke="#4a4a4a" stroke-width="1.8"/>
<text x="97.05000000000001" y="273.1" font-size="20" fill="#333" text-anchor="middle">360</text>
<path d="M553.2 105C556.7760000000001 101 559.1600000000001 102 560.6500000000001 100.5C563.63 103 566.1 103 568.1 99C570.1 103 572.57 103 575.55 100.5C577.04 102 579.424 101 583 105V107H553.2Z" fill="#c9585b"/>
<path d="M553.2 108H583C583 117.78 578.53 125.605 568.1 130.3C557.6700000000001 125.605 553.2 117.78 553.2 108Z" fill="#4a7cc4"/>
<text x="568.1" y="121.8" font-size="16" font-weight="bold" fill="#fff" text-anchor="middle">30</text>
<path d="M445.2 175.4C449.976 171.4 453.15999999999997 172.4 455.15 170.9C459.13 173.4 463.1 173.4 465.1 169.4C467.1 173.4 471.07 173.4 475.05 170.9C477.04 172.4 480.224 171.4 485 175.4V177.4H445.2Z" fill="#c9585b"/>
<path d="M445.2 178.4H485C485 188.24 479.03 196.09 465.1 200.8C451.17 196.09 445.2 188.24 445.2 178.4Z" fill="#4a7cc4"/>
<text x="465.1" y="192.3" font-size="15" font-weight="bold" fill="#fff" text-anchor="middle">35E</text>
<path d="M523 232.2C526.588 228.2 528.98 229.2 530.475 227.7C533.465 230.2 535.95 230.2 537.95 226.2C539.95 230.2 542.435 230.2 545.425 227.7C546.92 229.2 549.312 228.2 552.9 232.2V234.2H523Z" fill="#c9585b"/>
<path d="M523 235.2H552.9C552.9 245.1 548.415 252.975 537.95 257.7C527.485 252.975 523 245.1 523 235.2Z" fill="#4a7cc4"/>
<text x="537.95" y="249.1" font-size="16" font-weight="bold" fill="#fff" text-anchor="middle">45</text>
<path d="M168.5 306.2C172.016 302.2 174.36 303.2 175.825 301.7C178.755 304.2 181.15 304.2 183.15 300.2C185.15 304.2 187.54500000000002 304.2 190.47500000000002 301.7C191.94 303.2 194.28400000000002 302.2 197.8 306.2V308.2H168.5Z" fill="#c9585b"/>
<path d="M168.5 309.2H197.8C197.8 319.16 193.405 327.06 183.15 331.8C172.895 327.06 168.5 319.16 168.5 309.2Z" fill="#4a7cc4"/>
<text x="183.15" y="323.2" font-size="16" font-weight="bold" fill="#fff" text-anchor="middle">20</text>
<path d="M-27 307C-23.436 303 -21.06 304 -19.575 302.5C-16.605 305 -14.15 305 -12.15 301C-10.15 305 -7.694999999999999 305 -4.725 302.5C-3.24 304 -0.8639999999999994 303 2.7 307V309H-27Z" fill="#c9585b"/>
<path d="M-27 310H2.7C2.7 319.6 -1.755 327.35 -12.15 332C-22.545 327.35 -27 319.6 -27 310Z" fill="#4a7cc4"/>
<text x="-12.15" y="323.6" font-size="16" font-weight="bold" fill="#fff" text-anchor="middle">20</text>
<path d="M474.7 360.4C478.156 356.4 480.46 357.4 481.9 355.9C484.78 358.4 487.1 358.4 489.1 354.4C491.1 358.4 493.42 358.4 496.3 355.9C497.74 357.4 500.044 356.4 503.5 360.4V362.4H474.7Z" fill="#c9585b"/>
<path d="M474.7 363.4H503.5C503.5 373.36 499.18 381.26 489.1 386C479.02 381.26 474.7 373.36 474.7 363.4Z" fill="#4a7cc4"/>
<text x="489.1" y="377.4" font-size="16" font-weight="bold" fill="#fff" text-anchor="middle">20</text>
<path d="M647.5 256C652 254 654 250 655 247.400C660 250 668 250 672 247.400V278.300H655C648 274 646 264 647.500 256Z" fill="#fff" stroke="#4a4a4a" stroke-width="1.8"/>
<text x="651" y="271" font-size="19" fill="#333">175</text>
<circle cx="672" cy="127" r="14" fill="#fff" stroke="#4a4a4a" stroke-width="1.8"/>
<path d="M372.6 120.200L371 137L369.700 156L317.600 157.500L316 154L313 158L308.400 163L305.300 173.700L303.800 219.600L305.300 231.800L303.800 243" stroke="#123a8f" stroke-width="6" fill="none" stroke-linejoin="round"/>
<circle cx="379.7" cy="94.2" r="23.5" fill="#fff" stroke="#4690f5" stroke-width="8.2"/>
<text x="379.7" y="102.8" font-size="24" font-weight="bold" fill="#4690f5" text-anchor="middle">A</text>
<circle cx="310" cy="279.7" r="23.5" fill="#fff" stroke="#4690f5" stroke-width="8.2"/>
<text x="310" y="288.3" font-size="24" font-weight="bold" fill="#4690f5" text-anchor="middle">B</text>
<circle cx="289.900" cy="255.900" r="18.500" fill="#fff"/><circle cx="289.900" cy="255.900" r="13" fill="#5bbf8d"/>
<rect x="20.5" y="21.500" width="80" height="162" rx="3" fill="#000" opacity=".25" filter="url(#msh)"/>
<rect x="20.2" y="20.200" width="79.800" height="161.600" rx="3" fill="#fff"/>
<path d="M41.800 56H56V41.800H64V56H78V64H64V78H56V64H41.800Z" fill="#666"/>
<rect x="30" y="100" width="60" height="1.6" fill="#e6e6e6"/>
<rect x="41.800" y="137.900" width="36.200" height="8" fill="#666"/>
<rect x="569.700" y="17.500" width="77.600" height="77" rx="4" fill="#fff" stroke="#bac3cf" stroke-width="2"/>
<path transform="translate(590 38.500) scale(1.5)" d="M7 14H5v5h5v-2H7v-3zm-2-4h2V7h3V5H5v5zm12 7h-3v2h5v-5h-2v3zM14 5v2h3v3h2V5h-5z" fill="#17181c"/>
<text x="13" y="354.400" font-size="38.500" fill="#fff" stroke="#a4a9b0" stroke-opacity=".75" stroke-width="2.2" paint-order="stroke" stroke-linejoin="round" letter-spacing="-.6">Google</text>
<rect x="108.400" y="344" width="556" height="26" fill="#fff" opacity=".72"/>
<text x="112.500" y="362" font-size="20" fill="#000" letter-spacing="-.1">Map data ©2021</text>
<text x="287.400" y="362" font-size="20" fill="#000">10 km</text>
<path d="M350.200 350.300V359.900H506.200V350.300" stroke="#fff" stroke-width="6" fill="none"/>
<path d="M350.200 350.300V359.900H506.200V350.300" stroke="#666" stroke-width="3.400" fill="none"/>
<text x="534.600" y="362" font-size="20" fill="#000" letter-spacing="-.05">Terms of Use</text>
</svg>
</div>
<!-- stops -->
<div class="abs" style="left:70px;top:830px;width:4px;height:70px;background:#2f6fdb"></div>
<div class="t" style="left:52px;top:798px;width:40px;height:40px;border-radius:50%;background:#2f6fdb;color:#fff;font-size:25px;line-height:42px;text-align:center">B</div>
<div class="t" style="left:52px;top:894px;width:40px;height:40px;border-radius:50%;background:#2f6fdb;color:#fff;font-size:25px;line-height:42px;text-align:center">A</div>
<div class="t" id="s1" style="left:128px;top:803.2px;font-size:28.5px;letter-spacing:.45px">Dallas, TX</div>
<div class="t" id="d1" style="left:129px;top:840.5px;font-size:28.5px;letter-spacing:.15px;color:#657384">May 4</div>
<div class="t" id="s2" style="left:128px;top:891.9px;font-size:28.5px;letter-spacing:.45px">Dallas, TX</div>
<div class="t" id="d2" style="left:129px;top:936.2px;font-size:28.5px;letter-spacing:.15px;color:#657384">May 4</div>
<!-- card -->
<div class="abs" style="left:48px;top:1448px;width:664px;height:256px;border:2px solid #e6e8ed;border-radius:10px"></div>
<div class="t" id="as" style="left:97.5px;top:1508px;font-size:26px;letter-spacing:-.3px;color:#657384">AUTOMATIC SNAPSHOT</div>
<div class="btn" style="left:98px;top:1574px;width:564px;height:80px"></div>
<div class="t" id="rv" style="left:98px;top:1601px;width:564px;text-align:center;font-size:27.5px;letter-spacing:-.15px">Retrieve Video</div>

</div>

<!-- collapse toggle -->
<div class="abs" style="left:2088px;top:64px;width:64px;height:64px;border-radius:50%;background:#fff;border:2px solid #e3e6ec;box-shadow:0 1px 3px rgba(0,0,0,.08)">
<svg class="abs" style="left:6px;top:6px" width="48" height="48" viewBox="0 0 24 24" fill="#17181c"><path d="M10 6L8.59 7.41 13.17 12l-4.58 4.59L10 18l6-6z"/></svg>
</div>

<script>(function(){var w=window.innerWidth||document.documentElement.clientWidth;if(w&&Math.abs(w/2880-1)>0.01){document.documentElement.style.zoom=w/2880;}})();</script>
</body>
</html>
